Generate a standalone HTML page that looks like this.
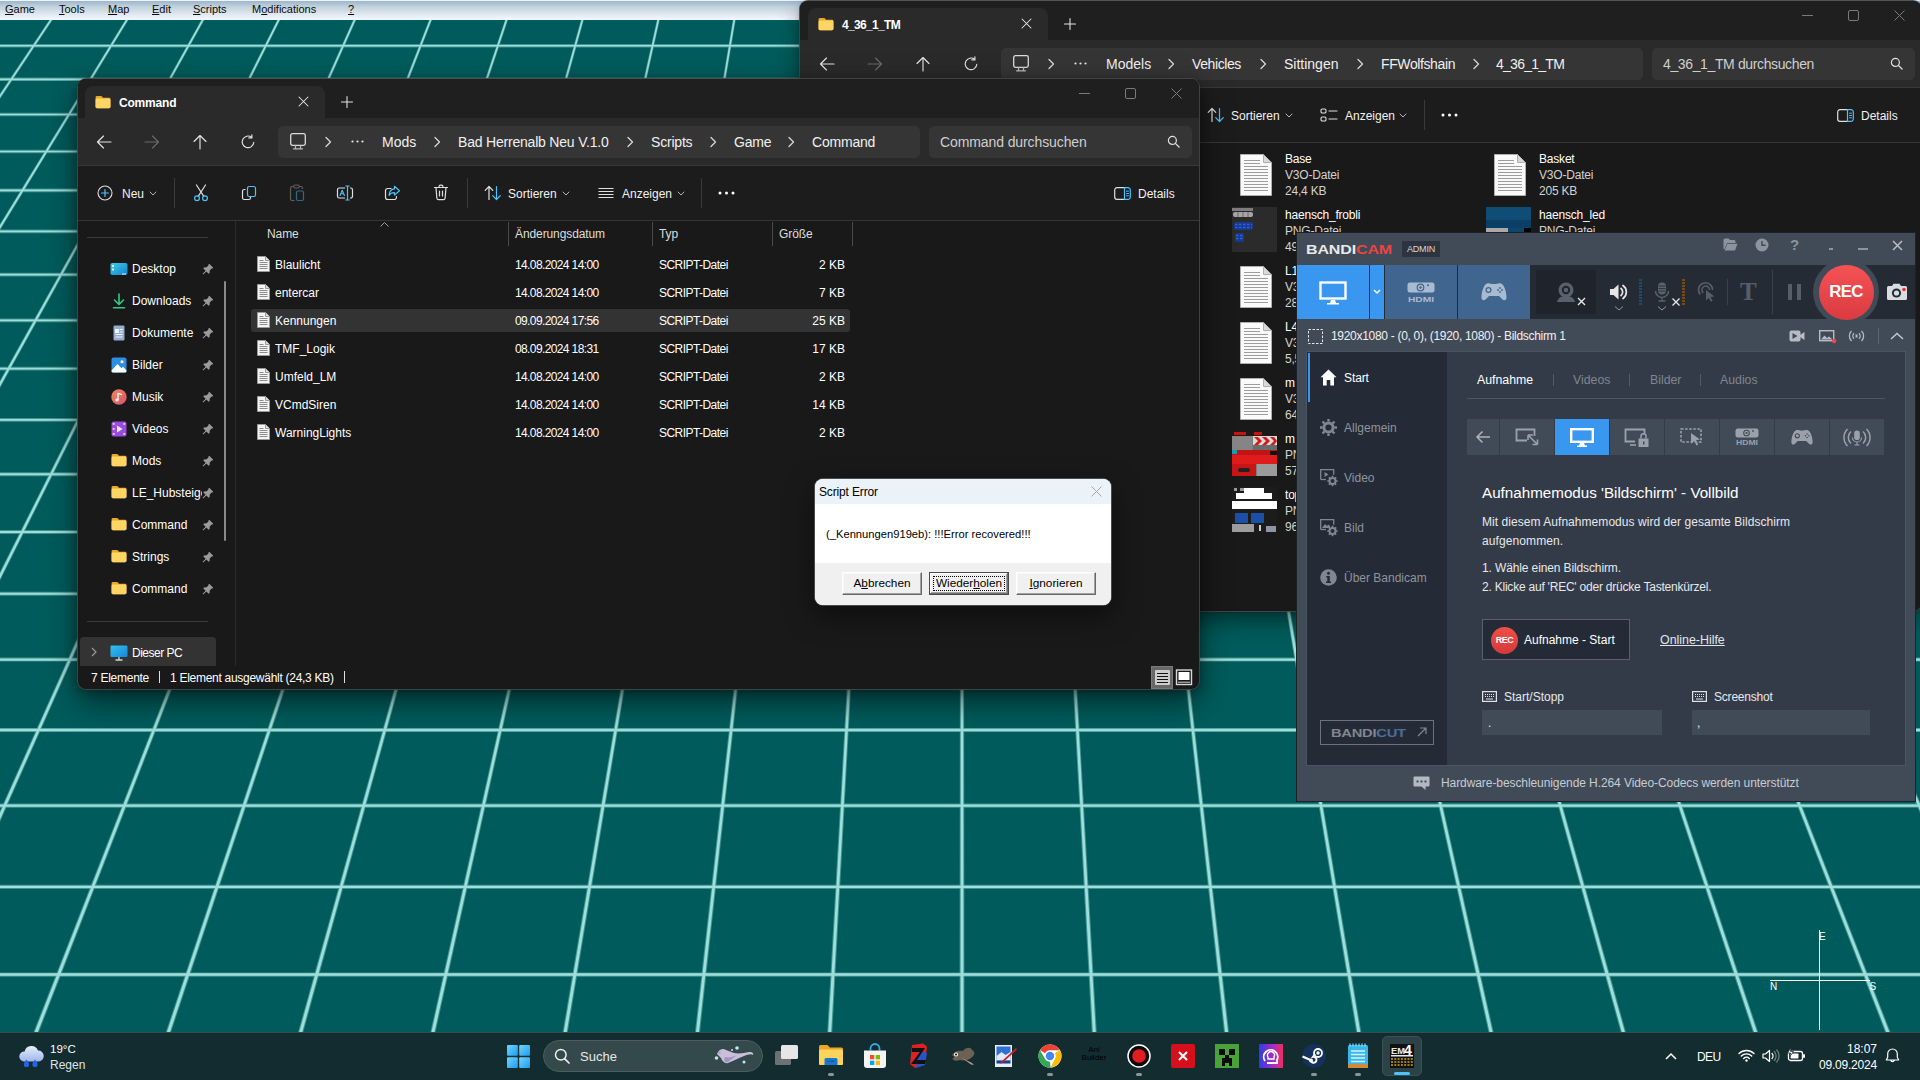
<!DOCTYPE html>
<html lang="de"><head><meta charset="utf-8"><title>Desktop</title>
<style>
*{box-sizing:border-box;margin:0;padding:0}
html,body{width:1920px;height:1080px;overflow:hidden;background:#005c5c}
body{position:relative;font-family:"Liberation Sans","DejaVu Sans",sans-serif;font-size:12px;color:#fff}
.abs{position:absolute}
#grid{position:absolute;left:0;top:0}
svg{display:block;overflow:visible}
.t{position:absolute;white-space:nowrap;height:20px;line-height:22px}
u{text-decoration:underline;text-underline-offset:1px}

.mn{top:0;height:19px;line-height:19px;font-size:11px;color:#0a0a0a}
.frame{position:absolute;left:78px;top:79px;width:1121px;height:610px;background:#191919;border-radius:8px;box-shadow:0 0 0 1px rgba(70,70,70,.9),0 12px 32px rgba(0,0,0,.55),0 2px 10px rgba(0,0,0,.35)}
.win{position:absolute;width:0;height:0}
#win2 .frame{box-shadow:0 0 0 1px rgba(70,70,70,.9),0 10px 22px rgba(0,0,0,.45),0 1px 5px rgba(0,0,0,.25)}
.crumb{font-size:14px;color:#f0f0f0;height:20px;line-height:20px}
.tb{font-size:12px;color:#f2f2f2}
.tl{font-size:12px;color:#fff;letter-spacing:-.2px;line-height:20px}
.tl.g{color:#d2d2d2}
.sb{font-size:12px;color:#fff}
.hd{font-size:12px;color:#dedede;letter-spacing:-.1px}
.rw{font-size:12px;color:#fff}
.rw.d{letter-spacing:-.62px}
.rw.ty{letter-spacing:-.55px}
.st{font-size:12px;color:#fff;letter-spacing:-.1px}
.btn{position:absolute;top:93px;width:80px;height:23px;background:#f0f0f0;font-size:11.800px;color:#000;text-align:center;line-height:21px;border:1px solid;border-color:#fff #696969 #696969 #fff;box-shadow:inset -1px -1px 0 #a0a0a0,inset 1px 1px 0 #f7f7f7;white-space:nowrap}
.btn.def{border-color:#4a4a4a;box-shadow:inset -1px -1px 0 #6f6f6f,inset 1px 1px 0 #fff,inset -2px -2px 0 #a0a0a0;line-height:21px}
.btn .foc{position:absolute;left:3px;top:3px;right:3px;bottom:3px;border:1px dotted #000}
.nv{font-size:12px;color:#8d949e}
.tab2{font-size:12.300px;color:#7e8690}
.mb{top:419px;width:54px;height:36px;background:#414b58}
.bp{font-size:12px;color:#e6e8eb}
.cp{font-size:10px;color:#fff}
.pill{top:1073px;width:6px;height:3px;border-radius:1.500px;background:#8a9799}
</style></head><body>
<svg id="grid" width="1920" height="1080" viewBox="0 0 1920 1080"><rect width="1920" height="1080" fill="#005c5c"/><path d="M0 12.07H1920V15.54H0ZM0 44.05H1920V47.55H0ZM0 77.58H1920V81.10H0ZM0 112.76H1920V116.32H0ZM0 149.72H1920V153.32H0ZM0 188.61H1920V192.25H0ZM0 229.58H1920V233.25H0ZM0 272.79H1920V276.51H0ZM0 318.44H1920V322.21H0ZM0 366.75H1920V370.56H0ZM0 417.94H1920V421.80H0ZM0 472.29H1920V476.21H0ZM0 530.10H1920V534.07H0ZM0 591.71H1920V595.74H0ZM0 657.50H1920V661.60H0ZM0 727.92H1920V732.09H0ZM0 803.47H1920V807.71H0ZM0 884.74H1920V889.06H0ZM0 972.40H1920V976.80H0ZM0 1067.23H1920V1071.73H0ZM-236.88 0 L-233.09 0 L-1193.42 1080 L-1200.26 1080ZM-162.01 0 L-158.33 0 L-1058.59 1080 L-1065.24 1080ZM-87.15 0 L-83.56 0 L-923.75 1080 L-930.22 1080ZM-12.29 0 L-8.80 0 L-788.91 1080 L-795.21 1080ZM62.56 0 L65.97 0 L-654.06 1080 L-660.20 1080ZM137.42 0 L140.73 0 L-519.21 1080 L-525.19 1080ZM212.27 0 L215.51 0 L-384.35 1080 L-390.20 1080ZM287.12 0 L290.28 0 L-249.49 1080 L-255.20 1080ZM361.96 0 L365.06 0 L-114.63 1080 L-120.21 1080ZM436.80 0 L439.84 0 L20.25 1080 L14.77 1080ZM511.64 0 L514.62 0 L155.13 1080 L149.74 1080ZM586.48 0 L589.41 0 L290.01 1080 L284.71 1080ZM661.31 0 L664.20 0 L424.90 1080 L419.68 1080ZM736.13 0 L739.00 0 L559.80 1080 L554.63 1080ZM810.95 0 L813.80 0 L694.71 1080 L689.58 1080ZM885.77 0 L888.61 0 L829.63 1080 L824.52 1080ZM960.59 0 L963.41 0 L964.55 1080 L959.45 1080ZM1035.39 0 L1038.23 0 L1099.48 1080 L1094.37 1080ZM1110.20 0 L1113.05 0 L1234.42 1080 L1229.29 1080ZM1185.00 0 L1187.87 0 L1369.37 1080 L1364.20 1080ZM1259.80 0 L1262.69 0 L1504.32 1080 L1499.10 1080ZM1334.59 0 L1337.52 0 L1639.29 1080 L1633.99 1080ZM1409.38 0 L1412.36 0 L1774.26 1080 L1768.87 1080ZM1484.16 0 L1487.20 0 L1909.23 1080 L1903.75 1080ZM1558.94 0 L1562.04 0 L2044.21 1080 L2038.63 1080ZM1633.72 0 L1636.88 0 L2179.20 1080 L2173.49 1080ZM1708.49 0 L1711.73 0 L2314.20 1080 L2308.35 1080ZM1783.27 0 L1786.58 0 L2449.19 1080 L2443.21 1080ZM1858.03 0 L1861.44 0 L2584.20 1080 L2578.06 1080ZM1932.80 0 L1936.29 0 L2719.21 1080 L2712.91 1080ZM2007.56 0 L2011.15 0 L2854.22 1080 L2847.75 1080ZM2082.33 0 L2086.01 0 L2989.24 1080 L2982.59 1080ZM2157.09 0 L2160.88 0 L3124.26 1080 L3117.42 1080Z" fill="#9cdeda" fill-opacity=".42"/><path d="M0 13.02H1920V14.59H0ZM0 45.00H1920V46.60H0ZM0 78.53H1920V80.15H0ZM0 113.71H1920V115.37H0ZM0 150.67H1920V152.37H0ZM0 189.56H1920V191.30H0ZM0 230.53H1920V232.30H0ZM0 273.74H1920V275.56H0ZM0 319.39H1920V321.26H0ZM0 367.70H1920V369.61H0ZM0 418.89H1920V420.85H0ZM0 473.24H1920V475.26H0ZM0 531.05H1920V533.12H0ZM0 592.66H1920V594.79H0ZM0 658.45H1920V660.65H0ZM0 728.87H1920V731.14H0ZM0 804.42H1920V806.76H0ZM0 885.69H1920V888.11H0ZM0 973.35H1920V975.85H0ZM0 1068.18H1920V1070.78H0ZM-236.08 0 L-233.88 0 L-1194.86 1080 L-1198.82 1080ZM-161.24 0 L-159.10 0 L-1059.98 1080 L-1063.84 1080ZM-86.40 0 L-84.32 0 L-925.11 1080 L-928.86 1080ZM-11.56 0 L-9.53 0 L-790.23 1080 L-793.88 1080ZM63.28 0 L65.25 0 L-655.35 1080 L-658.91 1080ZM138.11 0 L140.04 0 L-520.47 1080 L-523.94 1080ZM212.95 0 L214.83 0 L-385.58 1080 L-388.97 1080ZM287.78 0 L289.62 0 L-250.69 1080 L-254.00 1080ZM362.61 0 L364.41 0 L-115.80 1080 L-119.04 1080ZM437.44 0 L439.20 0 L19.10 1080 L15.92 1080ZM512.27 0 L514.00 0 L154.00 1080 L150.87 1080ZM587.09 0 L588.80 0 L288.90 1080 L285.83 1080ZM661.91 0 L663.60 0 L423.81 1080 L420.77 1080ZM736.73 0 L738.40 0 L558.72 1080 L555.72 1080ZM811.55 0 L813.20 0 L693.63 1080 L690.66 1080ZM886.37 0 L888.01 0 L828.55 1080 L825.59 1080ZM961.18 0 L962.82 0 L963.48 1080 L960.52 1080ZM1035.99 0 L1037.63 0 L1098.41 1080 L1095.45 1080ZM1110.80 0 L1112.45 0 L1233.34 1080 L1230.37 1080ZM1185.60 0 L1187.27 0 L1368.28 1080 L1365.28 1080ZM1260.40 0 L1262.09 0 L1503.23 1080 L1500.19 1080ZM1335.20 0 L1336.91 0 L1638.17 1080 L1635.10 1080ZM1410.00 0 L1411.73 0 L1773.13 1080 L1770.00 1080ZM1484.80 0 L1486.56 0 L1908.08 1080 L1904.90 1080ZM1559.59 0 L1561.39 0 L2043.04 1080 L2039.80 1080ZM1634.38 0 L1636.22 0 L2178.00 1080 L2174.69 1080ZM1709.17 0 L1711.05 0 L2312.97 1080 L2309.58 1080ZM1783.96 0 L1785.89 0 L2447.94 1080 L2444.47 1080ZM1858.75 0 L1860.72 0 L2582.91 1080 L2579.35 1080ZM1933.53 0 L1935.56 0 L2717.88 1080 L2714.23 1080ZM2008.32 0 L2010.40 0 L2852.86 1080 L2849.11 1080ZM2083.10 0 L2085.24 0 L2987.84 1080 L2983.98 1080ZM2157.88 0 L2160.08 0 L3122.82 1080 L3118.86 1080Z" fill="#9edfdb"/></svg>
<div class="abs" id="menubar" style="left:0;top:0;width:1920px;height:19.600px;background:linear-gradient(#eef4fc 0,#eef4fc 1px,#9fb7cf 1.2px,#a6bcd1 2.5px,#bfd2dc 6.5px,#d2dce5 10.500px,#e2e8f1 14.500px,#eef4fc 18px,#eef6fe 20px)"></div>
<div class="t mn" style="left:5px"><u>G</u>ame</div>
<div class="t mn" style="left:59px"><u>T</u>ools</div>
<div class="t mn" style="left:108px"><u>M</u>ap</div>
<div class="t mn" style="left:152px"><u>E</u>dit</div>
<div class="t mn" style="left:193px"><u>S</u>cripts</div>
<div class="t mn" style="left:252px">M<u>o</u>difications</div>
<div class="t mn" style="left:348px"><u>?</u></div>
<div class="win" id="win2" style="left:722px;top:-78px">
<div class="frame"></div>
<div class="abs" style="left:78px;top:79px;width:1121px;height:39px;background:#1f1f1f;border-radius:8px 8px 0 0"></div>
<div class="abs" style="left:78px;top:118px;width:1121px;height:48px;background:#2a2a2a;border-bottom:1px solid #383838"></div>
<div class="abs" style="left:78px;top:166px;width:1121px;height:55px;background:#1c1c1c;border-bottom:1px solid #363636"></div>
<div class="abs" style="left:1px;top:0;width:0;height:0">
<div class="abs" style="left:85px;top:86px;width:240px;height:32px;background:#2a2a2a;border-radius:8px 8px 0 0"></div>
<svg style="position:absolute;left:95px;top:95px" width="16" height="14" viewBox="0 0 18 16"><path d="M0.5 2.6A1.6 1.6 0 0 1 2.1 1h4.2c.5 0 .9.2 1.2.5L9 3h6.9a1.6 1.6 0 0 1 1.6 1.6v8.8A1.6 1.6 0 0 1 15.900000000000002 15H2.1A1.6 1.6 0 0 1 .5 13.4Z" fill="#e9a825"/><path d="M.5 5.600000000000001A1.6 1.6 0 0 1 2.1 4H15.9a1.6 1.6 0 0 1 1.6 1.6v7.8A1.6 1.6 0 0 1 15.9 15H2.1A1.6 1.6 0 0 1 .5 13.4Z" fill="#fdd565"/></svg>
<div class="t" style="left:119px;top:92px;font-size:12px;font-weight:bold;letter-spacing:-.67px;color:#fff">4_36_1_TM</div>
<svg class="abs" style="left:298px;top:96px" width="11" height="11" viewBox="0 0 11 11"><path d="M1 1l9 9M10 1l-9 9" stroke="#e6e6e6" stroke-width="1.050" stroke-linecap="round"/></svg>
<svg class="abs" style="left:341px;top:96px" width="12" height="12" viewBox="0 0 12 12"><path d="M6 .5v11M.5 6h11" stroke="#e6e6e6" stroke-width="1.050" stroke-linecap="round"/></svg>
<svg class="abs" style="left:1079px;top:93px" width="11" height="2" viewBox="0 0 11 2"><path d="M0 .5h11" stroke="#7a7a7a" stroke-width="1"/></svg>
<svg class="abs" style="left:1125px;top:88px" width="11" height="11" viewBox="0 0 11 11"><rect x=".5" y=".5" width="10" height="10" rx="1.500" fill="none" stroke="#7a7a7a" stroke-width="1"/></svg>
<svg class="abs" style="left:1171px;top:88px" width="11" height="11" viewBox="0 0 11 11"><path d="M.5.500l10 10M10.500.5l-10 10" stroke="#7a7a7a" stroke-width="1"/></svg>
<svg style="position:absolute;left:96px;top:135px" width="16" height="14" viewBox="0 0 16 14"><path d="M15 7H1.500M7.500 1 1.500 7l6 6" fill="none" stroke="#e4e4e4" stroke-width="1.150" stroke-linecap="round" stroke-linejoin="round"/></svg>
<svg style="position:absolute;left:144px;top:135px" width="16" height="14" viewBox="0 0 16 14"><path d="M1 7h13.500M8.500 1l6 6-6 6" fill="none" stroke="#6a6a6a" stroke-width="1.150" stroke-linecap="round" stroke-linejoin="round"/></svg>
<svg style="position:absolute;left:193px;top:134px" width="14" height="16" viewBox="0 0 14 16"><path d="M7 15V1.500M1 7.500l6-6 6 6" fill="none" stroke="#e4e4e4" stroke-width="1.150" stroke-linecap="round" stroke-linejoin="round"/></svg>
<svg style="position:absolute;left:240px;top:134px" width="16" height="16" viewBox="0 0 16 16"><path d="M13.800 8.300A5.800 5.800 0 1 1 11.600 3.300" fill="none" stroke="#e4e4e4" stroke-width="1.150" stroke-linecap="round"/><path d="M11.900.8v3.100H8.800" fill="none" stroke="#e4e4e4" stroke-width="1.150" stroke-linecap="round" stroke-linejoin="round"/></svg>
<div class="abs" style="left:278px;top:126px;width:642px;height:32px;background:#353535;border-radius:5px"></div>
<svg style="position:absolute;left:289px;top:133px" width="18" height="17" viewBox="0 0 18 17"><rect x="1.700" y=".7" width="14.600" height="11.600" rx="1.800" fill="none" stroke="#dcdcdc" stroke-width="1.300"/><path d="M6.500 12.500v3M11.500 12.500v3M4.500 15.800h9" stroke="#b8b8b8" stroke-width="1.300" stroke-linecap="round"/></svg>
<svg style="position:absolute;left:324px;top:136px" width="8" height="12" viewBox="0 0 8 12"><path d="M2 1.500 6.500 6 2 10.500" fill="none" stroke="#d6d6d6" stroke-width="1.300" stroke-linecap="round" stroke-linejoin="round"/></svg>
<svg class="abs" style="left:351px;top:140px" width="13" height="3" viewBox="0 0 13 3"><circle cx="1.500" cy="1.500" r="1.100" fill="#e8e8e8"/><circle cx="6.500" cy="1.500" r="1.100" fill="#e8e8e8"/><circle cx="11.500" cy="1.500" r="1.100" fill="#e8e8e8"/></svg>
<div class="t crumb" style="left:383px;top:132px">Models</div>
<svg style="position:absolute;left:444px;top:136px" width="8" height="12" viewBox="0 0 8 12"><path d="M2 1.500 6.500 6 2 10.500" fill="none" stroke="#d6d6d6" stroke-width="1.300" stroke-linecap="round" stroke-linejoin="round"/></svg>
<div class="t crumb" style="left:469px;top:132px;letter-spacing:-.4px">Vehicles</div>
<svg style="position:absolute;left:536px;top:136px" width="8" height="12" viewBox="0 0 8 12"><path d="M2 1.500 6.500 6 2 10.500" fill="none" stroke="#d6d6d6" stroke-width="1.300" stroke-linecap="round" stroke-linejoin="round"/></svg>
<div class="t crumb" style="left:561px;top:132px;letter-spacing:0">Sittingen</div>
<svg style="position:absolute;left:633px;top:136px" width="8" height="12" viewBox="0 0 8 12"><path d="M2 1.500 6.500 6 2 10.500" fill="none" stroke="#d6d6d6" stroke-width="1.300" stroke-linecap="round" stroke-linejoin="round"/></svg>
<div class="t crumb" style="left:658px;top:132px;letter-spacing:-.39px">FFWolfshain</div>
<svg style="position:absolute;left:749px;top:136px" width="8" height="12" viewBox="0 0 8 12"><path d="M2 1.500 6.500 6 2 10.500" fill="none" stroke="#d6d6d6" stroke-width="1.300" stroke-linecap="round" stroke-linejoin="round"/></svg>
<div class="t crumb" style="left:773px;top:132px;letter-spacing:-.74px">4_36_1_TM</div>

<div class="abs" style="left:929px;top:126px;width:263px;height:32px;background:#353535;border-radius:5px"></div>
<div class="t" style="left:940px;top:131px;font-size:14px;color:#cfcfcf;letter-spacing:-.37px">4_36_1_TM durchsuchen</div>
<svg style="position:absolute;left:1167px;top:135px" width="13" height="13" viewBox="0 0 14 14"><circle cx="5.800" cy="5.800" r="4.300" fill="none" stroke="#e0e0e0" stroke-width="1.300"/><path d="M9 9l4 4" stroke="#e0e0e0" stroke-width="1.400" stroke-linecap="round"/></svg>
</div>

<svg style="position:absolute;left:485px;top:185px" width="18" height="16" viewBox="0 0 18 16"><path d="M5 14.500V1.500M1.200 5.300 5 1.500l3.800 3.800" fill="none" stroke="#e0e0e0" stroke-width="1.200" stroke-linecap="round" stroke-linejoin="round"/><path d="M12.500 1.500v13M8.700 10.700l3.800 3.800 3.800-3.800" fill="none" stroke="#4cc2ff" stroke-width="1.200" stroke-linecap="round" stroke-linejoin="round"/></svg>
<div class="t tb" style="left:509px;top:183px">Sortieren</div>
<svg style="position:absolute;left:563px;top:191px" width="8" height="5" viewBox="0 0 8 5"><path d="M1 1 4 4 7 1" fill="none" stroke="#b4b4b4" stroke-width="1" stroke-linecap="round" stroke-linejoin="round"/></svg>
<svg style="position:absolute;left:598px;top:186px" width="18" height="14" viewBox="0 0 18 14"><rect x="1" y="1" width="5" height="4" rx="1.300" fill="none" stroke="#e0e0e0" stroke-width="1.100"/><rect x="1" y="9" width="5" height="4" rx="1.300" fill="none" stroke="#e0e0e0" stroke-width="1.100"/><path d="M9 3h8M9 11h8" stroke="#e0e0e0" stroke-width="1.100" stroke-linecap="round"/></svg>
<div class="t tb" style="left:623px;top:183px">Anzeigen</div>
<svg style="position:absolute;left:677px;top:191px" width="8" height="5" viewBox="0 0 8 5"><path d="M1 1 4 4 7 1" fill="none" stroke="#b4b4b4" stroke-width="1" stroke-linecap="round" stroke-linejoin="round"/></svg>
<div class="abs" style="left:702px;top:178px;width:1px;height:30px;background:#3a3a3a"></div>
<svg class="abs" style="left:719px;top:191px" width="17" height="4" viewBox="0 0 17 4"><circle cx="2" cy="2" r="1.500" fill="#fff"/><circle cx="8.500" cy="2" r="1.500" fill="#fff"/><circle cx="15" cy="2" r="1.500" fill="#fff"/></svg>
<svg style="position:absolute;left:1115px;top:187px" width="17" height="13" viewBox="0 0 17 13"><path d="M10.500.7H3A2.300 2.300 0 0 0 .7 3v7A2.300 2.300 0 0 0 3 12.300h7.500" fill="none" stroke="#e0e0e0" stroke-width="1.200"/><path d="M10.500.7H14A2.300 2.300 0 0 1 16.300 3v7A2.300 2.300 0 0 1 14 12.300H10.500Z" fill="none" stroke="#4cc2ff" stroke-width="1.200"/><path d="M12.500 4.200h2M12.500 6.500h2M12.500 8.800h2" stroke="#4cc2ff" stroke-width="1" stroke-linecap="round"/></svg>
<div class="t tb" style="left:1139px;top:183px">Details</div>

<svg style="position:absolute;left:518px;top:232px" width="32" height="42" viewBox="0 0 32 42"><path d="M.5.500h23l8 8v33H.5Z" fill="#fafafa" stroke="#b0b0b0"/><path d="M23.500.5v8h8Z" fill="#d8d8d8" stroke="#b0b0b0"/><path d="M4 6.500h16M4 9.500h16M4 12.500h24M4 15.500h24M4 18.500h24M4 21.500h24M4 24.500h24M4 27.500h24M4 30.500h24M4 33.500h24M4 36.500h24" stroke="#9c9c9c" stroke-width="1"/></svg>
<div class="t tl" style="left:563px;top:227px">Base</div><div class="t tl g" style="left:563px;top:243px">V3O-Datei</div><div class="t tl g" style="left:563px;top:259px">24,4 KB</div>
<svg style="position:absolute;left:772px;top:232px" width="32" height="42" viewBox="0 0 32 42"><path d="M.5.500h23l8 8v33H.5Z" fill="#fafafa" stroke="#b0b0b0"/><path d="M23.500.5v8h8Z" fill="#d8d8d8" stroke="#b0b0b0"/><path d="M4 6.500h16M4 9.500h16M4 12.500h24M4 15.500h24M4 18.500h24M4 21.500h24M4 24.500h24M4 27.500h24M4 30.500h24M4 33.500h24M4 36.500h24" stroke="#9c9c9c" stroke-width="1"/></svg>
<div class="t tl" style="left:817px;top:227px">Basket</div><div class="t tl g" style="left:817px;top:243px">V3O-Datei</div><div class="t tl g" style="left:817px;top:259px">205 KB</div>

<svg class="abs" style="left:510px;top:285px" width="45" height="45" viewBox="0 0 45 45"><rect width="45" height="45" fill="#2b2b2b"/><rect x="0" y="1" width="21" height="3" fill="#7d7d7d"/><rect x="1" y="5" width="20" height="5" rx="2" fill="#a5a5a5"/><path d="M6 5v5M11 5v5M16 5v5" stroke="#6a6a6a" stroke-width="1"/><rect x="2" y="15" width="19" height="8" rx="2" fill="#163a8f"/><path d="M3 17.500h17M3 20.500h17" stroke="#2f62d6" stroke-width="1.600" stroke-dasharray="2.500 1.500"/><rect x="3" y="26" width="9" height="9" rx="1.500" fill="#163a8f"/><path d="M4 28.500h7M4 31.500h7" stroke="#2f62d6" stroke-width="1.600" stroke-dasharray="2.500 1.500"/></svg>
<div class="t tl" style="left:563px;top:283px">haensch_frobli</div><div class="t tl g" style="left:563px;top:299px">PNG-Datei</div><div class="t tl g" style="left:563px;top:315px">49,1 KB</div>
<svg class="abs" style="left:764px;top:285px" width="45" height="45" viewBox="0 0 45 45"><rect width="45" height="45" fill="#0f4d77"/><rect y="13" width="45" height="8" fill="#0b3f66"/><rect y="21" width="22" height="8" fill="#a9a9a9"/><rect x="22" y="21" width="23" height="24" fill="#0c466f"/><rect x="38" y="21" width="7" height="7" fill="#000"/></svg>
<div class="t tl" style="left:817px;top:283px">haensch_led</div><div class="t tl g" style="left:817px;top:299px">PNG-Datei</div><div class="t tl g" style="left:817px;top:315px">12,6 KB</div>

<svg style="position:absolute;left:518px;top:344px" width="32" height="42" viewBox="0 0 32 42"><path d="M.5.500h23l8 8v33H.5Z" fill="#fafafa" stroke="#b0b0b0"/><path d="M23.500.5v8h8Z" fill="#d8d8d8" stroke="#b0b0b0"/><path d="M4 6.500h16M4 9.500h16M4 12.500h24M4 15.500h24M4 18.500h24M4 21.500h24M4 24.500h24M4 27.500h24M4 30.500h24M4 33.500h24M4 36.500h24" stroke="#9c9c9c" stroke-width="1"/></svg>
<div class="t tl" style="left:563px;top:339px">L1_Logo</div><div class="t tl g" style="left:563px;top:355px">V3O-Datei</div><div class="t tl g" style="left:563px;top:371px">28,7 KB</div>
<svg style="position:absolute;left:518px;top:400px" width="32" height="42" viewBox="0 0 32 42"><path d="M.5.500h23l8 8v33H.5Z" fill="#fafafa" stroke="#b0b0b0"/><path d="M23.500.5v8h8Z" fill="#d8d8d8" stroke="#b0b0b0"/><path d="M4 6.500h16M4 9.500h16M4 12.500h24M4 15.500h24M4 18.500h24M4 21.500h24M4 24.500h24M4 27.500h24M4 30.500h24M4 33.500h24M4 36.500h24" stroke="#9c9c9c" stroke-width="1"/></svg>
<div class="t tl" style="left:563px;top:395px">L4_Logo</div><div class="t tl g" style="left:563px;top:411px">V3O-Datei</div><div class="t tl g" style="left:563px;top:427px">5,51 KB</div>
<svg style="position:absolute;left:518px;top:456px" width="32" height="42" viewBox="0 0 32 42"><path d="M.5.500h23l8 8v33H.5Z" fill="#fafafa" stroke="#b0b0b0"/><path d="M23.500.5v8h8Z" fill="#d8d8d8" stroke="#b0b0b0"/><path d="M4 6.500h16M4 9.500h16M4 12.500h24M4 15.500h24M4 18.500h24M4 21.500h24M4 24.500h24M4 27.500h24M4 30.500h24M4 33.500h24M4 36.500h24" stroke="#9c9c9c" stroke-width="1"/></svg>
<div class="t tl" style="left:563px;top:451px;width:10px;overflow:hidden">main</div><div class="t tl g" style="left:563px;top:467px">V3O-Datei</div><div class="t tl g" style="left:563px;top:483px">64,2 KB</div>

<svg class="abs" style="left:510px;top:509px" width="45" height="45" viewBox="0 0 45 45"><rect width="45" height="45" fill="#7d7d7d"/><rect width="45" height="5" fill="#1a1a1a"/><rect x="2" y="1" width="12" height="3" fill="#c11"/><rect x="22" y="1" width="8" height="3" fill="#c11"/><rect y="5" width="20" height="14" fill="#858585"/><rect x="21" y="5" width="24" height="9" fill="#d9d9d9"/><path d="M22 6h4l4 4-4 4h-4l4-4zM30 6h4l4 4-4 4h-4l4-4zM38 6h4l3 4-3 4h-4l4-4z" fill="#d41a1a"/><rect x="21" y="14" width="24" height="5" fill="#6a6a6a"/><rect y="19" width="45" height="5" fill="#c21414"/><rect y="19" width="5" height="4" fill="#14a0b8"/><rect y="24" width="45" height="9" fill="#e01b1b"/><rect y="33" width="24" height="12" fill="#c81616"/><rect x="6" y="37" width="12" height="4" rx="2" fill="#222"/><rect x="25" y="33" width="20" height="12" fill="#9b9b9b"/><rect x="38" y="20" width="7" height="4" fill="#111"/></svg>
<div class="t tl" style="left:563px;top:507px;width:10px;overflow:hidden">main_tex</div><div class="t tl g" style="left:563px;top:523px">PNG-Datei</div><div class="t tl g" style="left:563px;top:539px">57,9 KB</div>
<svg class="abs" style="left:510px;top:565px" width="45" height="45" viewBox="0 0 45 45"><rect width="45" height="45" fill="#1c1c1c"/><rect x="2" y="1" width="3" height="3" fill="#999"/><rect x="8" y="1" width="4" height="3" fill="#999"/><rect x="12" y="1" width="20" height="6" fill="#fff"/><rect x="4" y="6" width="36" height="6" fill="#fff"/><rect y="14" width="45" height="8" fill="#fff"/><rect x="3" y="26" width="13" height="10" fill="#1c4fa8"/><rect x="19" y="26" width="13" height="10" fill="#1c4fa8"/><rect y="37" width="22" height="8" fill="#9d9d9d"/><rect x="34" y="39" width="10" height="6" fill="#8f96a3"/><rect x="27" y="38" width="2" height="6" fill="#ccc"/></svg>
<div class="t tl" style="left:563px;top:563px;width:11px;overflow:hidden">top_tex</div><div class="t tl g" style="left:563px;top:579px">PNG-Datei</div><div class="t tl g" style="left:563px;top:595px">96,3 KB</div>
</div>
<div class="win" id="win1" style="left:0;top:0">
<div class="frame"></div>
<div class="abs" style="left:78px;top:79px;width:1121px;height:39px;background:#1f1f1f;border-radius:8px 8px 0 0"></div>
<div class="abs" style="left:78px;top:118px;width:1121px;height:48px;background:#2a2a2a;border-bottom:1px solid #383838"></div>
<div class="abs" style="left:78px;top:166px;width:1121px;height:55px;background:#1c1c1c;border-bottom:1px solid #363636"></div>
<div class="abs" style="left:0px;top:0;width:0;height:0">
<div class="abs" style="left:85px;top:86px;width:240px;height:32px;background:#2a2a2a;border-radius:8px 8px 0 0"></div>
<svg style="position:absolute;left:95px;top:95px" width="16" height="14" viewBox="0 0 18 16"><path d="M0.5 2.6A1.6 1.6 0 0 1 2.1 1h4.2c.5 0 .9.2 1.2.5L9 3h6.9a1.6 1.6 0 0 1 1.6 1.6v8.8A1.6 1.6 0 0 1 15.900000000000002 15H2.1A1.6 1.6 0 0 1 .5 13.4Z" fill="#e9a825"/><path d="M.5 5.600000000000001A1.6 1.6 0 0 1 2.1 4H15.9a1.6 1.6 0 0 1 1.6 1.6v7.8A1.6 1.6 0 0 1 15.9 15H2.1A1.6 1.6 0 0 1 .5 13.4Z" fill="#fdd565"/></svg>
<div class="t" style="left:119px;top:92px;font-size:12px;font-weight:bold;letter-spacing:-.2px;color:#fff">Command</div>
<svg class="abs" style="left:298px;top:96px" width="11" height="11" viewBox="0 0 11 11"><path d="M1 1l9 9M10 1l-9 9" stroke="#e6e6e6" stroke-width="1.050" stroke-linecap="round"/></svg>
<svg class="abs" style="left:341px;top:96px" width="12" height="12" viewBox="0 0 12 12"><path d="M6 .5v11M.5 6h11" stroke="#e6e6e6" stroke-width="1.050" stroke-linecap="round"/></svg>
<svg class="abs" style="left:1079px;top:93px" width="11" height="2" viewBox="0 0 11 2"><path d="M0 .5h11" stroke="#7a7a7a" stroke-width="1"/></svg>
<svg class="abs" style="left:1125px;top:88px" width="11" height="11" viewBox="0 0 11 11"><rect x=".5" y=".5" width="10" height="10" rx="1.500" fill="none" stroke="#7a7a7a" stroke-width="1"/></svg>
<svg class="abs" style="left:1171px;top:88px" width="11" height="11" viewBox="0 0 11 11"><path d="M.5.500l10 10M10.500.5l-10 10" stroke="#7a7a7a" stroke-width="1"/></svg>
<svg style="position:absolute;left:96px;top:135px" width="16" height="14" viewBox="0 0 16 14"><path d="M15 7H1.500M7.500 1 1.500 7l6 6" fill="none" stroke="#e4e4e4" stroke-width="1.150" stroke-linecap="round" stroke-linejoin="round"/></svg>
<svg style="position:absolute;left:144px;top:135px" width="16" height="14" viewBox="0 0 16 14"><path d="M1 7h13.500M8.500 1l6 6-6 6" fill="none" stroke="#6a6a6a" stroke-width="1.150" stroke-linecap="round" stroke-linejoin="round"/></svg>
<svg style="position:absolute;left:193px;top:134px" width="14" height="16" viewBox="0 0 14 16"><path d="M7 15V1.500M1 7.500l6-6 6 6" fill="none" stroke="#e4e4e4" stroke-width="1.150" stroke-linecap="round" stroke-linejoin="round"/></svg>
<svg style="position:absolute;left:240px;top:134px" width="16" height="16" viewBox="0 0 16 16"><path d="M13.800 8.300A5.800 5.800 0 1 1 11.600 3.300" fill="none" stroke="#e4e4e4" stroke-width="1.150" stroke-linecap="round"/><path d="M11.900.8v3.100H8.800" fill="none" stroke="#e4e4e4" stroke-width="1.150" stroke-linecap="round" stroke-linejoin="round"/></svg>
<div class="abs" style="left:278px;top:126px;width:642px;height:32px;background:#353535;border-radius:5px"></div>
<svg style="position:absolute;left:289px;top:133px" width="18" height="17" viewBox="0 0 18 17"><rect x="1.700" y=".7" width="14.600" height="11.600" rx="1.800" fill="none" stroke="#dcdcdc" stroke-width="1.300"/><path d="M6.500 12.500v3M11.500 12.500v3M4.500 15.800h9" stroke="#b8b8b8" stroke-width="1.300" stroke-linecap="round"/></svg>
<svg style="position:absolute;left:324px;top:136px" width="8" height="12" viewBox="0 0 8 12"><path d="M2 1.500 6.500 6 2 10.500" fill="none" stroke="#d6d6d6" stroke-width="1.300" stroke-linecap="round" stroke-linejoin="round"/></svg>
<svg class="abs" style="left:351px;top:140px" width="13" height="3" viewBox="0 0 13 3"><circle cx="1.500" cy="1.500" r="1.100" fill="#e8e8e8"/><circle cx="6.500" cy="1.500" r="1.100" fill="#e8e8e8"/><circle cx="11.500" cy="1.500" r="1.100" fill="#e8e8e8"/></svg>
<div class="t crumb" style="left:382px;top:132px">Mods</div>
<svg style="position:absolute;left:433px;top:136px" width="8" height="12" viewBox="0 0 8 12"><path d="M2 1.500 6.500 6 2 10.500" fill="none" stroke="#d6d6d6" stroke-width="1.300" stroke-linecap="round" stroke-linejoin="round"/></svg>
<div class="t crumb" style="left:458px;top:132px;letter-spacing:-.2px">Bad Herrenalb Neu V.1.0</div>
<svg style="position:absolute;left:626px;top:136px" width="8" height="12" viewBox="0 0 8 12"><path d="M2 1.500 6.500 6 2 10.500" fill="none" stroke="#d6d6d6" stroke-width="1.300" stroke-linecap="round" stroke-linejoin="round"/></svg>
<div class="t crumb" style="left:651px;top:132px;letter-spacing:-.2px">Scripts</div>
<svg style="position:absolute;left:709px;top:136px" width="8" height="12" viewBox="0 0 8 12"><path d="M2 1.500 6.500 6 2 10.500" fill="none" stroke="#d6d6d6" stroke-width="1.300" stroke-linecap="round" stroke-linejoin="round"/></svg>
<div class="t crumb" style="left:734px;top:132px;letter-spacing:-.2px">Game</div>
<svg style="position:absolute;left:787px;top:136px" width="8" height="12" viewBox="0 0 8 12"><path d="M2 1.500 6.500 6 2 10.500" fill="none" stroke="#d6d6d6" stroke-width="1.300" stroke-linecap="round" stroke-linejoin="round"/></svg>
<div class="t crumb" style="left:812px;top:132px;letter-spacing:-.2px">Command</div>

<div class="abs" style="left:929px;top:126px;width:263px;height:32px;background:#353535;border-radius:5px"></div>
<div class="t" style="left:940px;top:131px;font-size:14px;color:#cfcfcf;letter-spacing:-.1px">Command durchsuchen</div>
<svg style="position:absolute;left:1167px;top:135px" width="13" height="13" viewBox="0 0 14 14"><circle cx="5.800" cy="5.800" r="4.300" fill="none" stroke="#e0e0e0" stroke-width="1.300"/><path d="M9 9l4 4" stroke="#e0e0e0" stroke-width="1.400" stroke-linecap="round"/></svg>
</div>

<svg style="position:absolute;left:97px;top:185px" width="16" height="16" viewBox="0 0 16 16"><circle cx="8" cy="8" r="7" fill="none" stroke="#e0e0e0" stroke-width="1.100"/><path d="M8 4.500v7M4.500 8h7" stroke="#4cc2ff" stroke-width="1.200" stroke-linecap="round"/></svg>
<div class="t tb" style="left:122px;top:183px">Neu</div>
<svg style="position:absolute;left:149px;top:191px" width="8" height="5" viewBox="0 0 8 5"><path d="M1 1 4 4 7 1" fill="none" stroke="#b4b4b4" stroke-width="1" stroke-linecap="round" stroke-linejoin="round"/></svg>
<div class="abs" style="left:174px;top:178px;width:1px;height:30px;background:#3a3a3a"></div>
<svg style="position:absolute;left:193px;top:184px" width="16" height="18" viewBox="0 0 16 18"><path d="M3.500 1 10.800 12.300M12.500 1 5.200 12.300" stroke="#e0e0e0" stroke-width="1.200" stroke-linecap="round"/><circle cx="4" cy="14.300" r="2.400" fill="none" stroke="#4cc2ff" stroke-width="1.200"/><circle cx="12" cy="14.300" r="2.400" fill="none" stroke="#4cc2ff" stroke-width="1.200"/></svg>
<svg style="position:absolute;left:241px;top:185px" width="16" height="16" viewBox="0 0 16 16"><path d="M4.500 4.500H3.300A1.800 1.800 0 0 0 1.500 6.300v6.400a1.800 1.800 0 0 0 1.800 1.800h4.400a1.800 1.800 0 0 0 1.800-1.800V12" fill="none" stroke="#e0e0e0" stroke-width="1.200"/><rect x="6.500" y="1.500" width="8" height="10" rx="1.800" fill="none" stroke="#4cc2ff" stroke-width="1.200"/></svg>
<svg style="position:absolute;left:289px;top:184px" width="16" height="18" viewBox="0 0 16 18"><path d="M5.500 16.500h-2.200A1.800 1.800 0 0 1 1.500 14.700V4.300A1.800 1.800 0 0 1 3.300 2.500H5M10 2.500h1.700a1.800 1.800 0 0 1 1.800 1.800V5" fill="none" stroke="#5e5e5e" stroke-width="1.200"/><rect x="4.800" y="1" width="5.400" height="3" rx="1.200" fill="none" stroke="#5e5e5e" stroke-width="1.100"/><rect x="7.500" y="7" width="7" height="9.500" rx="1.500" fill="none" stroke="#2c6a8a" stroke-width="1.200"/></svg>
<svg style="position:absolute;left:336px;top:185px" width="18" height="16" viewBox="0 0 18 16"><path d="M9 3H3.300A1.800 1.800 0 0 0 1.500 4.800v6.400A1.800 1.800 0 0 0 3.300 13H9M14 3h.7a1.800 1.800 0 0 1 1.800 1.800v6.400a1.800 1.800 0 0 1-1.800 1.800H14" fill="none" stroke="#e0e0e0" stroke-width="1.200"/><path d="M11.500 1v14M9.800 1h3.400M9.800 15h3.400" stroke="#4cc2ff" stroke-width="1.200" stroke-linecap="round"/><path d="M4 10.500 6.200 5.300 8.400 10.500M4.800 8.800h2.800" fill="none" stroke="#4cc2ff" stroke-width="1.100" stroke-linejoin="round" stroke-linecap="round"/></svg>
<svg style="position:absolute;left:384px;top:185px" width="17" height="16" viewBox="0 0 17 16"><path d="M7 3.500H3.800A2.300 2.300 0 0 0 1.500 5.800v6.400a2.300 2.300 0 0 0 2.300 2.300h6.400a2.300 2.300 0 0 0 2.300-2.300V11.500" fill="none" stroke="#e0e0e0" stroke-width="1.200" stroke-linecap="round"/><path d="M10.500 1.300 15.500 5.700 10.500 10.100V7.600C7.800 7.500 6.200 8.500 5 10.300 5.300 6.800 7.200 4.200 10.500 3.900Z" fill="none" stroke="#4cc2ff" stroke-width="1.200" stroke-linejoin="round"/></svg>
<svg style="position:absolute;left:433px;top:184px" width="16" height="17" viewBox="0 0 16 17"><path d="M1.500 3.500h13M6 3.300V2.800A1.600 1.600 0 0 1 7.600 1.200h.8A1.600 1.600 0 0 1 10 2.800v.5M3 3.700l.9 10.500a1.700 1.700 0 0 0 1.700 1.500h4.800a1.700 1.700 0 0 0 1.700-1.500L13 3.700M6.500 7v5M9.500 7v5" fill="none" stroke="#e0e0e0" stroke-width="1.200" stroke-linecap="round"/></svg>
<div class="abs" style="left:467px;top:178px;width:1px;height:30px;background:#3a3a3a"></div>
<svg style="position:absolute;left:484px;top:185px" width="18" height="16" viewBox="0 0 18 16"><path d="M5 14.500V1.500M1.200 5.300 5 1.500l3.800 3.800" fill="none" stroke="#e0e0e0" stroke-width="1.200" stroke-linecap="round" stroke-linejoin="round"/><path d="M12.500 1.500v13M8.700 10.700l3.800 3.800 3.800-3.800" fill="none" stroke="#4cc2ff" stroke-width="1.200" stroke-linecap="round" stroke-linejoin="round"/></svg>
<div class="t tb" style="left:508px;top:183px">Sortieren</div>
<svg style="position:absolute;left:562px;top:191px" width="8" height="5" viewBox="0 0 8 5"><path d="M1 1 4 4 7 1" fill="none" stroke="#b4b4b4" stroke-width="1" stroke-linecap="round" stroke-linejoin="round"/></svg>
<svg style="position:absolute;left:598px;top:187px" width="16" height="12" viewBox="0 0 16 12"><path d="M.5 1.500h15M.5 4.500h15M.5 7.500h15M.5 10.500h15" stroke="#e0e0e0" stroke-width="1.100"/></svg>
<div class="t tb" style="left:622px;top:183px">Anzeigen</div>
<svg style="position:absolute;left:677px;top:191px" width="8" height="5" viewBox="0 0 8 5"><path d="M1 1 4 4 7 1" fill="none" stroke="#b4b4b4" stroke-width="1" stroke-linecap="round" stroke-linejoin="round"/></svg>
<div class="abs" style="left:701px;top:178px;width:1px;height:30px;background:#3a3a3a"></div>
<svg class="abs" style="left:718px;top:191px" width="17" height="4" viewBox="0 0 17 4"><circle cx="2" cy="2" r="1.500" fill="#fff"/><circle cx="8.500" cy="2" r="1.500" fill="#fff"/><circle cx="15" cy="2" r="1.500" fill="#fff"/></svg>
<svg style="position:absolute;left:1114px;top:187px" width="17" height="13" viewBox="0 0 17 13"><path d="M10.500.7H3A2.300 2.300 0 0 0 .7 3v7A2.300 2.300 0 0 0 3 12.300h7.500" fill="none" stroke="#e0e0e0" stroke-width="1.200"/><path d="M10.500.7H14A2.300 2.300 0 0 1 16.300 3v7A2.300 2.300 0 0 1 14 12.300H10.500Z" fill="none" stroke="#4cc2ff" stroke-width="1.200"/><path d="M12.500 4.200h2M12.500 6.500h2M12.500 8.800h2" stroke="#4cc2ff" stroke-width="1" stroke-linecap="round"/></svg>
<div class="t tb" style="left:1138px;top:183px">Details</div>
<div class="abs" style="left:87px;top:237px;width:121px;height:1px;background:#3a3a3a"></div>
<div class="abs" style="left:235px;top:221px;width:1px;height:445px;background:#2b2b2b"></div>
<div class="abs" style="left:224px;top:281px;width:2px;height:260px;background:#8a8a8a;border-radius:1px"></div>
<svg style="position:absolute;left:110px;top:261px" width="18" height="16" viewBox="0 0 18 16"><defs><linearGradient id="dg" x1="0" y1="0" x2="1" y2="1"><stop offset="0" stop-color="#3ccbea"/><stop offset="1" stop-color="#1583cf"/></linearGradient></defs><rect x=".5" y="2" width="17" height="12" rx="1.800" fill="url(#dg)"/><rect x="2" y="4" width="2" height="2" fill="#d8f2ff"/><rect x="2" y="7.500" width="2" height="2" fill="#d8f2ff"/><rect x="12" y="12.500" width="4" height="1" fill="#d8f2ff"/></svg><div class="t sb" style="left:132px;top:258px">Desktop</div><svg style="position:absolute;left:202px;top:263px" width="12" height="12" viewBox="0 0 12 12"><path d="M7.200.8 11.200 4.800 10.300 5.700 9.600 5.500 7.700 7.400 7.600 9.900 6.700 10.800 4.300 8.400 1.300 11.400.6 10.700 3.600 7.700 1.200 5.300 2.100 4.400 4.600 4.300 6.500 2.400 6.300 1.700Z" fill="#9b9b9b"/></svg>
<svg style="position:absolute;left:110px;top:293px" width="18" height="16" viewBox="0 0 18 16"><path d="M9 1v10M4.500 7 9 11.500 13.500 7" fill="none" stroke="#2fc88c" stroke-width="1.600" stroke-linecap="round" stroke-linejoin="round"/><path d="M3.500 14.800h11" stroke="#2fc88c" stroke-width="1.600" stroke-linecap="round"/></svg><div class="t sb" style="left:132px;top:290px">Downloads</div><svg style="position:absolute;left:202px;top:295px" width="12" height="12" viewBox="0 0 12 12"><path d="M7.200.8 11.200 4.800 10.300 5.700 9.600 5.500 7.700 7.400 7.600 9.900 6.700 10.800 4.300 8.400 1.300 11.400.6 10.700 3.600 7.700 1.200 5.300 2.100 4.400 4.600 4.300 6.500 2.400 6.300 1.700Z" fill="#9b9b9b"/></svg>
<svg style="position:absolute;left:110px;top:325px" width="18" height="16" viewBox="0 0 18 16"><path d="M3.500 1.800A1.300 1.300 0 0 1 4.800.5h8.400a1.300 1.300 0 0 1 1.300 1.300v12.400a1.300 1.300 0 0 1-1.300 1.300H4.800a1.300 1.300 0 0 1-1.300-1.300Z" fill="#94add2"/><path d="M5.500 4.500h3v3h-3zM9.800 4.500h3M9.800 7h3M5.500 9.500h7M5.500 12h7" stroke="#f2f6fc" stroke-width="1.100" fill="#f2f6fc"/></svg><div class="t sb" style="left:132px;top:322px">Dokumente</div><svg style="position:absolute;left:202px;top:327px" width="12" height="12" viewBox="0 0 12 12"><path d="M7.200.8 11.200 4.800 10.300 5.700 9.600 5.500 7.700 7.400 7.600 9.900 6.700 10.800 4.300 8.400 1.300 11.400.6 10.700 3.600 7.700 1.200 5.300 2.100 4.400 4.600 4.300 6.500 2.400 6.300 1.700Z" fill="#9b9b9b"/></svg>
<svg style="position:absolute;left:110px;top:357px" width="18" height="16" viewBox="0 0 18 16"><rect x="1.500" y=".5" width="15" height="15" rx="2" fill="#2b8fe6"/><circle cx="12" cy="4.800" r="1.500" fill="#fff"/><path d="M1.500 13.500 7.500 7l4 4.300 1.600-1.500 3.400 3.700v.5a1.500 1.500 0 0 1-1.500 1.500H3a1.500 1.500 0 0 1-1.500-1.500Z" fill="#fff"/></svg><div class="t sb" style="left:132px;top:354px">Bilder</div><svg style="position:absolute;left:202px;top:359px" width="12" height="12" viewBox="0 0 12 12"><path d="M7.200.8 11.200 4.800 10.300 5.700 9.600 5.500 7.700 7.400 7.600 9.900 6.700 10.800 4.300 8.400 1.300 11.400.6 10.700 3.600 7.700 1.200 5.300 2.100 4.400 4.600 4.300 6.500 2.400 6.300 1.700Z" fill="#9b9b9b"/></svg>
<svg style="position:absolute;left:110px;top:389px" width="18" height="16" viewBox="0 0 18 16"><defs><linearGradient id="mg" x1="0" y1="0" x2="1" y2="1"><stop offset="0" stop-color="#f08a5a"/><stop offset="1" stop-color="#d8506e"/></linearGradient></defs><circle cx="9" cy="8" r="7.700" fill="url(#mg)"/><path d="M8 11V4.300l3.500 1.200" fill="none" stroke="#fff" stroke-width="1.300" stroke-linecap="round" stroke-linejoin="round"/><circle cx="6.900" cy="11" r="1.600" fill="#fff"/></svg><div class="t sb" style="left:132px;top:386px">Musik</div><svg style="position:absolute;left:202px;top:391px" width="12" height="12" viewBox="0 0 12 12"><path d="M7.200.8 11.200 4.800 10.300 5.700 9.600 5.500 7.700 7.400 7.600 9.900 6.700 10.800 4.300 8.400 1.300 11.400.6 10.700 3.600 7.700 1.200 5.300 2.100 4.400 4.600 4.300 6.500 2.400 6.300 1.700Z" fill="#9b9b9b"/></svg>
<svg style="position:absolute;left:110px;top:421px" width="18" height="16" viewBox="0 0 18 16"><rect x="1.500" y=".5" width="15" height="15" rx="2" fill="#9a4ddb"/><rect x="2.800" y="2" width="1.800" height="1.800" fill="#e9d4ff"/><rect x="2.800" y="7" width="1.800" height="1.800" fill="#e9d4ff"/><rect x="2.800" y="12" width="1.800" height="1.800" fill="#e9d4ff"/><rect x="13.400" y="2" width="1.800" height="1.800" fill="#e9d4ff"/><rect x="13.400" y="12" width="1.800" height="1.800" fill="#e9d4ff"/><path d="M7 4.500 12.500 8 7 11.500Z" fill="#f3e6ff"/></svg><div class="t sb" style="left:132px;top:418px">Videos</div><svg style="position:absolute;left:202px;top:423px" width="12" height="12" viewBox="0 0 12 12"><path d="M7.200.8 11.200 4.800 10.300 5.700 9.600 5.500 7.700 7.400 7.600 9.900 6.700 10.800 4.300 8.400 1.300 11.400.6 10.700 3.600 7.700 1.200 5.300 2.100 4.400 4.600 4.300 6.500 2.400 6.300 1.700Z" fill="#9b9b9b"/></svg>
<svg style="position:absolute;left:111px;top:453px" width="16" height="14" viewBox="0 0 18 16"><path d="M0.5 2.6A1.6 1.6 0 0 1 2.1 1h4.2c.5 0 .9.2 1.2.5L9 3h6.9a1.6 1.6 0 0 1 1.6 1.6v8.8A1.6 1.6 0 0 1 15.900000000000002 15H2.1A1.6 1.6 0 0 1 .5 13.4Z" fill="#e9a825"/><path d="M.5 5.600000000000001A1.6 1.6 0 0 1 2.1 4H15.9a1.6 1.6 0 0 1 1.6 1.6v7.8A1.6 1.6 0 0 1 15.9 15H2.1A1.6 1.6 0 0 1 .5 13.4Z" fill="#fdd565"/></svg><div class="t sb" style="left:132px;top:450px">Mods</div><svg style="position:absolute;left:202px;top:455px" width="12" height="12" viewBox="0 0 12 12"><path d="M7.200.8 11.200 4.800 10.300 5.700 9.600 5.500 7.700 7.400 7.600 9.900 6.700 10.800 4.300 8.400 1.300 11.400.6 10.700 3.600 7.700 1.200 5.300 2.100 4.400 4.600 4.300 6.500 2.400 6.300 1.700Z" fill="#9b9b9b"/></svg>
<svg style="position:absolute;left:111px;top:485px" width="16" height="14" viewBox="0 0 18 16"><path d="M0.5 2.6A1.6 1.6 0 0 1 2.1 1h4.2c.5 0 .9.2 1.2.5L9 3h6.9a1.6 1.6 0 0 1 1.6 1.6v8.8A1.6 1.6 0 0 1 15.900000000000002 15H2.1A1.6 1.6 0 0 1 .5 13.4Z" fill="#e9a825"/><path d="M.5 5.600000000000001A1.6 1.6 0 0 1 2.1 4H15.9a1.6 1.6 0 0 1 1.6 1.6v7.8A1.6 1.6 0 0 1 15.9 15H2.1A1.6 1.6 0 0 1 .5 13.4Z" fill="#fdd565"/></svg><div class="t sb" style="left:132px;top:482px;width:70px;overflow:hidden">LE_Hubsteiger</div><svg style="position:absolute;left:202px;top:487px" width="12" height="12" viewBox="0 0 12 12"><path d="M7.200.8 11.200 4.800 10.300 5.700 9.600 5.500 7.700 7.400 7.600 9.900 6.700 10.800 4.300 8.400 1.300 11.400.6 10.700 3.600 7.700 1.200 5.300 2.100 4.400 4.600 4.300 6.500 2.400 6.300 1.700Z" fill="#9b9b9b"/></svg>
<svg style="position:absolute;left:111px;top:517px" width="16" height="14" viewBox="0 0 18 16"><path d="M0.5 2.6A1.6 1.6 0 0 1 2.1 1h4.2c.5 0 .9.2 1.2.5L9 3h6.9a1.6 1.6 0 0 1 1.6 1.6v8.8A1.6 1.6 0 0 1 15.900000000000002 15H2.1A1.6 1.6 0 0 1 .5 13.4Z" fill="#e9a825"/><path d="M.5 5.600000000000001A1.6 1.6 0 0 1 2.1 4H15.9a1.6 1.6 0 0 1 1.6 1.6v7.8A1.6 1.6 0 0 1 15.9 15H2.1A1.6 1.6 0 0 1 .5 13.4Z" fill="#fdd565"/></svg><div class="t sb" style="left:132px;top:514px">Command</div><svg style="position:absolute;left:202px;top:519px" width="12" height="12" viewBox="0 0 12 12"><path d="M7.200.8 11.200 4.800 10.300 5.700 9.600 5.500 7.700 7.400 7.600 9.900 6.700 10.800 4.300 8.400 1.300 11.400.6 10.700 3.600 7.700 1.200 5.300 2.100 4.400 4.600 4.300 6.500 2.400 6.300 1.700Z" fill="#9b9b9b"/></svg>
<svg style="position:absolute;left:111px;top:549px" width="16" height="14" viewBox="0 0 18 16"><path d="M0.5 2.6A1.6 1.6 0 0 1 2.1 1h4.2c.5 0 .9.2 1.2.5L9 3h6.9a1.6 1.6 0 0 1 1.6 1.6v8.8A1.6 1.6 0 0 1 15.900000000000002 15H2.1A1.6 1.6 0 0 1 .5 13.4Z" fill="#e9a825"/><path d="M.5 5.600000000000001A1.6 1.6 0 0 1 2.1 4H15.9a1.6 1.6 0 0 1 1.6 1.6v7.8A1.6 1.6 0 0 1 15.9 15H2.1A1.6 1.6 0 0 1 .5 13.4Z" fill="#fdd565"/></svg><div class="t sb" style="left:132px;top:546px">Strings</div><svg style="position:absolute;left:202px;top:551px" width="12" height="12" viewBox="0 0 12 12"><path d="M7.200.8 11.200 4.800 10.300 5.700 9.600 5.500 7.700 7.400 7.600 9.900 6.700 10.800 4.300 8.400 1.300 11.400.6 10.700 3.600 7.700 1.200 5.300 2.100 4.400 4.600 4.300 6.500 2.400 6.300 1.700Z" fill="#9b9b9b"/></svg>
<svg style="position:absolute;left:111px;top:581px" width="16" height="14" viewBox="0 0 18 16"><path d="M0.5 2.6A1.6 1.6 0 0 1 2.1 1h4.2c.5 0 .9.2 1.2.5L9 3h6.9a1.6 1.6 0 0 1 1.6 1.6v8.8A1.6 1.6 0 0 1 15.900000000000002 15H2.1A1.6 1.6 0 0 1 .5 13.4Z" fill="#e9a825"/><path d="M.5 5.600000000000001A1.6 1.6 0 0 1 2.1 4H15.9a1.6 1.6 0 0 1 1.6 1.6v7.8A1.6 1.6 0 0 1 15.9 15H2.1A1.6 1.6 0 0 1 .5 13.4Z" fill="#fdd565"/></svg><div class="t sb" style="left:132px;top:578px">Command</div><svg style="position:absolute;left:202px;top:583px" width="12" height="12" viewBox="0 0 12 12"><path d="M7.200.8 11.200 4.800 10.300 5.700 9.600 5.500 7.700 7.400 7.600 9.900 6.700 10.800 4.300 8.400 1.300 11.400.6 10.700 3.600 7.700 1.200 5.300 2.100 4.400 4.600 4.300 6.500 2.400 6.300 1.700Z" fill="#9b9b9b"/></svg>
<div class="abs" style="left:87px;top:621px;width:121px;height:1px;background:#3a3a3a"></div>
<div class="abs" style="left:80px;top:637px;width:136px;height:29px;background:#333;border-radius:4px 4px 0 0"></div>
<svg class="abs" style="left:90px;top:647px" width="8" height="10" viewBox="0 0 8 10"><path d="M2 1l4 4-4 4" fill="none" stroke="#9a9a9a" stroke-width="1.200"/></svg>
<svg style="position:absolute;left:110px;top:645px" width="18" height="16" viewBox="0 0 18 16"><defs><linearGradient id="pg" x1="0" y1="0" x2="1" y2="1"><stop offset="0" stop-color="#35c1f1"/><stop offset="1" stop-color="#1487d9"/></linearGradient></defs><rect x=".5" y=".5" width="17" height="11.500" rx="1.200" fill="url(#pg)"/><path d="M9 12v2.500M5.500 15h7" stroke="#cfd6dc" stroke-width="1.300"/></svg><div class="t sb" style="left:132px;top:642px;letter-spacing:-.5px">Dieser PC</div>
<div class="t hd" style="left:267px;top:223px">Name</div><svg class="abs" style="left:380px;top:222px" width="9" height="5" viewBox="0 0 9 5"><path d="M.5 4.500l4-4 4 4" fill="none" stroke="#a0a0a0" stroke-width="1"/></svg><div class="abs" style="left:508px;top:222px;width:1px;height:24px;background:#4a4a4a"></div><div class="abs" style="left:652px;top:222px;width:1px;height:24px;background:#4a4a4a"></div><div class="abs" style="left:772px;top:222px;width:1px;height:24px;background:#4a4a4a"></div><div class="abs" style="left:852px;top:222px;width:1px;height:24px;background:#4a4a4a"></div><div class="t hd" style="left:515px;top:223px">Änderungsdatum</div><div class="t hd" style="left:659px;top:223px">Typ</div><div class="t hd" style="left:779px;top:223px">Größe</div>
<svg style="position:absolute;left:257px;top:256px" width="13" height="16" viewBox="0 0 13 16"><path d="M.5.5h8l4 4v11H.5Z" fill="#f4f4f4" stroke="#9a9a9a" stroke-width="1"/><path d="M8.5.5v4h4" fill="#dcdcdc" stroke="#9a9a9a" stroke-width="1"/><path d="M2.500 4.500h4M2.500 6.500h8M2.500 8.500h8M2.500 10.500h8M2.500 12.500h8" stroke="#8c8c8c" stroke-width="1"/></svg><div class="t rw" style="left:275px;top:254px">Blaulicht</div><div class="t rw d" style="left:515px;top:254px">14.08.2024 14:00</div><div class="t rw ty" style="left:659px;top:254px">SCRIPT-Datei</div><div class="t rw" style="left:785px;width:60px;text-align:right;top:254px">2 KB</div>
<svg style="position:absolute;left:257px;top:284px" width="13" height="16" viewBox="0 0 13 16"><path d="M.5.5h8l4 4v11H.5Z" fill="#f4f4f4" stroke="#9a9a9a" stroke-width="1"/><path d="M8.5.5v4h4" fill="#dcdcdc" stroke="#9a9a9a" stroke-width="1"/><path d="M2.500 4.500h4M2.500 6.500h8M2.500 8.500h8M2.500 10.500h8M2.500 12.500h8" stroke="#8c8c8c" stroke-width="1"/></svg><div class="t rw" style="left:275px;top:282px">entercar</div><div class="t rw d" style="left:515px;top:282px">14.08.2024 14:00</div><div class="t rw ty" style="left:659px;top:282px">SCRIPT-Datei</div><div class="t rw" style="left:785px;width:60px;text-align:right;top:282px">7 KB</div>
<div class="abs" style="left:251px;top:309px;width:599px;height:23px;background:#333;border-radius:3px"></div><svg style="position:absolute;left:257px;top:312px" width="13" height="16" viewBox="0 0 13 16"><path d="M.5.5h8l4 4v11H.5Z" fill="#f4f4f4" stroke="#9a9a9a" stroke-width="1"/><path d="M8.5.5v4h4" fill="#dcdcdc" stroke="#9a9a9a" stroke-width="1"/><path d="M2.500 4.500h4M2.500 6.500h8M2.500 8.500h8M2.500 10.500h8M2.500 12.500h8" stroke="#8c8c8c" stroke-width="1"/></svg><div class="t rw" style="left:275px;top:310px">Kennungen</div><div class="t rw d" style="left:515px;top:310px">09.09.2024 17:56</div><div class="t rw ty" style="left:659px;top:310px">SCRIPT-Datei</div><div class="t rw" style="left:785px;width:60px;text-align:right;top:310px">25 KB</div>
<svg style="position:absolute;left:257px;top:340px" width="13" height="16" viewBox="0 0 13 16"><path d="M.5.5h8l4 4v11H.5Z" fill="#f4f4f4" stroke="#9a9a9a" stroke-width="1"/><path d="M8.5.5v4h4" fill="#dcdcdc" stroke="#9a9a9a" stroke-width="1"/><path d="M2.500 4.500h4M2.500 6.500h8M2.500 8.500h8M2.500 10.500h8M2.500 12.500h8" stroke="#8c8c8c" stroke-width="1"/></svg><div class="t rw" style="left:275px;top:338px">TMF_Logik</div><div class="t rw d" style="left:515px;top:338px">08.09.2024 18:31</div><div class="t rw ty" style="left:659px;top:338px">SCRIPT-Datei</div><div class="t rw" style="left:785px;width:60px;text-align:right;top:338px">17 KB</div>
<svg style="position:absolute;left:257px;top:368px" width="13" height="16" viewBox="0 0 13 16"><path d="M.5.5h8l4 4v11H.5Z" fill="#f4f4f4" stroke="#9a9a9a" stroke-width="1"/><path d="M8.5.5v4h4" fill="#dcdcdc" stroke="#9a9a9a" stroke-width="1"/><path d="M2.500 4.500h4M2.500 6.500h8M2.500 8.500h8M2.500 10.500h8M2.500 12.500h8" stroke="#8c8c8c" stroke-width="1"/></svg><div class="t rw" style="left:275px;top:366px">Umfeld_LM</div><div class="t rw d" style="left:515px;top:366px">14.08.2024 14:00</div><div class="t rw ty" style="left:659px;top:366px">SCRIPT-Datei</div><div class="t rw" style="left:785px;width:60px;text-align:right;top:366px">2 KB</div>
<svg style="position:absolute;left:257px;top:396px" width="13" height="16" viewBox="0 0 13 16"><path d="M.5.5h8l4 4v11H.5Z" fill="#f4f4f4" stroke="#9a9a9a" stroke-width="1"/><path d="M8.5.5v4h4" fill="#dcdcdc" stroke="#9a9a9a" stroke-width="1"/><path d="M2.500 4.500h4M2.500 6.500h8M2.500 8.500h8M2.500 10.500h8M2.500 12.500h8" stroke="#8c8c8c" stroke-width="1"/></svg><div class="t rw" style="left:275px;top:394px">VCmdSiren</div><div class="t rw d" style="left:515px;top:394px">14.08.2024 14:00</div><div class="t rw ty" style="left:659px;top:394px">SCRIPT-Datei</div><div class="t rw" style="left:785px;width:60px;text-align:right;top:394px">14 KB</div>
<svg style="position:absolute;left:257px;top:424px" width="13" height="16" viewBox="0 0 13 16"><path d="M.5.5h8l4 4v11H.5Z" fill="#f4f4f4" stroke="#9a9a9a" stroke-width="1"/><path d="M8.5.5v4h4" fill="#dcdcdc" stroke="#9a9a9a" stroke-width="1"/><path d="M2.500 4.500h4M2.500 6.500h8M2.500 8.500h8M2.500 10.500h8M2.500 12.500h8" stroke="#8c8c8c" stroke-width="1"/></svg><div class="t rw" style="left:275px;top:422px">WarningLights</div><div class="t rw d" style="left:515px;top:422px">14.08.2024 14:00</div><div class="t rw ty" style="left:659px;top:422px">SCRIPT-Datei</div><div class="t rw" style="left:785px;width:60px;text-align:right;top:422px">2 KB</div>
<div class="t st" style="left:91px;top:667px;letter-spacing:-.27px">7 Elemente</div><div class="abs" style="left:159px;top:671px;width:1px;height:12px;background:#e0e0e0"></div><div class="t st" style="left:170px;top:667px;letter-spacing:-.28px">1 Element ausgewählt (24,3 KB)</div><div class="abs" style="left:344px;top:671px;width:1px;height:12px;background:#e0e0e0"></div>
<svg class="abs" style="left:1151px;top:666px" width="44" height="23" viewBox="0 0 44 23"><rect x=".5" y=".5" width="21" height="22" fill="#686868" stroke="#7a7a7a"/><rect x="4" y="4" width="15" height="15" rx="1" fill="#cdcdcd"/><path d="M6 7.500h11M6 10.500h11M6 13.500h11M6 16.500h11" stroke="#111" stroke-width="1"/><rect x="25.500" y="4" width="15" height="14.500" fill="none" stroke="#d8d8d8" stroke-width="1.400"/><rect x="27.500" y="6" width="11" height="8" fill="#fff"/><path d="M27 16.200h12" stroke="#d8d8d8" stroke-width="1"/></svg>
</div>
<div id="dlg" class="abs" style="left:815px;top:479px;width:296px;height:126px;border-radius:8px;background:#fff;overflow:hidden;box-shadow:0 0 0 1px rgba(120,120,120,.55),0 10px 28px rgba(0,0,0,.5)">
<div class="abs" style="left:0;top:0;width:296px;height:25px;background:#ebf3f8"></div>
<div class="t" style="left:4px;top:2px;font-size:12px;color:#000;letter-spacing:-.15px">Script Error</div>
<svg class="abs" style="left:276px;top:7px" width="11" height="11" viewBox="0 0 11 11"><path d="M.5.500l10 10M10.500.5l-10 10" stroke="#a3a8ab" stroke-width="1"/></svg>
<div class="t" style="left:11px;top:44px;font-size:11.200px;color:#000">(_Kennungen919eb): !!!Error recovered!!!</div>
<div class="abs" style="left:0;top:84px;width:296px;height:42px;background:#f0f0f0"></div>
<div class="btn" style="left:27px">A<u>b</u>brechen</div>
<div class="btn def" style="left:114px"><span class="foc"></span>Wieder<u>h</u>olen</div>
<div class="btn" style="left:201px"><u>I</u>gnorieren</div>
</div>
<div id="bdc" class="abs" style="left:1296px;top:232px;width:620px;height:570px;background:#1d2128"></div>
<div class="abs" style="left:1297px;top:233px;width:618px;height:568px;background:#414b58"></div>
<!-- title -->
<div class="t" style="left:1306px;top:239px;font-size:12.600px;font-weight:bold;color:#e9e9e9;transform:scaleX(1.270);transform-origin:0 50%;letter-spacing:-.1px">BANDI<span style="color:#ef4340">CAM</span></div>
<div class="abs" style="left:1402px;top:241px;width:38px;height:16px;background:#2d343f"></div>
<div class="t" style="left:1402px;top:238px;width:38px;text-align:center;font-size:9px;color:#d4d7db;letter-spacing:-.2px">ADMIN</div>
<svg class="abs" style="left:1723px;top:238px" width="15" height="14" viewBox="0 0 15 14"><path d="M.5 2A1.500 1.500 0 0 1 2 .5h3.500l1.500 1.500H11A1.500 1.500 0 0 1 12.500 3.500v1.500H4L1.500 11H.5Z" fill="#8d949d"/><path d="M4.300 5.800H14.500L12 12.500H1.500Z" fill="#8d949d"/></svg>
<svg class="abs" style="left:1755px;top:238px" width="14" height="14" viewBox="0 0 14 14"><circle cx="7" cy="7" r="6.500" fill="#8d949d"/><path d="M7 3v4.300h3.500" fill="none" stroke="#414b58" stroke-width="1.500"/></svg>
<div class="t" style="left:1790px;top:234px;font-size:15px;font-weight:bold;color:#8d949d">?</div>
<div class="abs" style="left:1829px;top:248px;width:4px;height:2px;background:#8d949d"></div>
<div class="abs" style="left:1858px;top:248px;width:10px;height:2px;background:#8d949d"></div>
<svg class="abs" style="left:1892px;top:240px" width="11" height="11" viewBox="0 0 11 11"><path d="M1 1l9 9M10 1l-9 9" stroke="#b9bec5" stroke-width="1.500"/></svg>
<!-- mode row -->
<div class="abs" style="left:1297px;top:265px;width:618px;height:54px;background:#252b34"></div>
<div class="abs" style="left:1297px;top:265px;width:72px;height:54px;background:#3a97f0"></div>
<div class="abs" style="left:1370px;top:265px;width:14px;height:54px;background:#3a97f0"></div>
<div class="abs" style="left:1385px;top:265px;width:72px;height:54px;background:#40668f"></div>
<div class="abs" style="left:1458px;top:265px;width:72px;height:54px;background:#40668f"></div>
<div class="abs" style="left:1536px;top:270px;width:60px;height:44px;background:#1f242c"></div>
<svg class="abs" style="left:1319px;top:281px" width="28" height="24" viewBox="0 0 28 24"><rect x="1.500" y="1.500" width="25" height="16" fill="none" stroke="#fff" stroke-width="2.400"/><path d="M12 19h4l1 3h3v1.500H8V22h3z" fill="#fff"/></svg>
<svg class="abs" style="left:1373px;top:289px" width="8" height="6" viewBox="0 0 8 6"><path d="M1 1l3 3 3-3" fill="none" stroke="#fff" stroke-width="1.500"/></svg>
<svg class="abs" style="left:1407px;top:282px" width="28" height="20" viewBox="0 0 28 20"><rect x=".5" y=".5" width="27" height="10" rx="2.500" fill="#a9bbd0"/><circle cx="13.500" cy="5.500" r="3.300" fill="none" stroke="#40668f" stroke-width="1.200"/><circle cx="13.500" cy="5.500" r="1.300" fill="#40668f"/><circle cx="21" cy="3.300" r="1" fill="#40668f"/><text x="14" y="19.500" text-anchor="middle" font-family="Liberation Sans,sans-serif" font-weight="bold" font-size="8" textLength="26" lengthAdjust="spacingAndGlyphs" fill="#a9bbd0">HDMI</text></svg>
<svg class="abs" style="left:1480px;top:282px" width="28" height="20" viewBox="0 0 28 20"><path d="M7 1.500C9 .6 11 2 14 2s5-1.400 7-.5c3.500 1.500 5.500 9 5.500 14 0 2.500-2.300 3.500-4 2L19 14H9l-3.500 3.500c-1.700 1.500-4 .5-4-2C1.500 10.500 3.500 3 7 1.500Z" fill="#a9bbd0"/><circle cx="8.500" cy="8" r="2.400" fill="none" stroke="#40668f" stroke-width="1.300"/><circle cx="18" cy="8" r=".9" fill="#40668f"/><circle cx="22" cy="8" r=".9" fill="#40668f"/><circle cx="20" cy="6" r=".9" fill="#40668f"/><circle cx="20" cy="10" r=".9" fill="#40668f"/></svg>
<svg class="abs" style="left:1556px;top:281px" width="32" height="26" viewBox="0 0 32 26"><circle cx="10" cy="9" r="7.500" fill="#59616c"/><circle cx="10" cy="9" r="4.200" fill="#1f242c"/><circle cx="10" cy="9" r="2.300" fill="#59616c"/><path d="M1 21c1-4 4-6 9-6s8 2 9 6z" fill="#59616c"/><path d="M22 17l7 7M29 17l-7 7" stroke="#e8e8e8" stroke-width="1.400"/></svg>
<svg class="abs" style="left:1609px;top:283px" width="20" height="18" viewBox="0 0 20 18"><path d="M1 6h3.500L9.500 1.500v15L4.500 12H1z" fill="#e6e6e6"/><path d="M12 5.500a4.500 4.500 0 0 1 0 7M14 2.500a8 8 0 0 1 0 13" fill="none" stroke="#e6e6e6" stroke-width="1.700" stroke-linecap="round"/></svg>
<svg class="abs" style="left:1614px;top:306px" width="10" height="5" viewBox="0 0 10 5"><path d="M1 .5l4 3.500 4-3.500" fill="none" stroke="#9098a3" stroke-width="1"/></svg>
<div class="abs" style="left:1639px;top:279px;width:3px;height:26px;background:repeating-linear-gradient(#1d4a73 0 2px,transparent 2px 3px)"></div>
<svg class="abs" style="left:1654px;top:282px" width="16" height="20" viewBox="0 0 16 20"><rect x="4" y=".5" width="8" height="12" rx="4" fill="#5a626d"/><path d="M1.500 9a6.500 6.500 0 0 0 13 0M8 15.500V19M4.500 19h7" fill="none" stroke="#5a626d" stroke-width="1.400"/><path d="M4.500 4h7M4.500 6.500h7M4.500 9h7" stroke="#252b34" stroke-width=".8"/></svg>
<svg class="abs" style="left:1657px;top:306px" width="10" height="5" viewBox="0 0 10 5"><path d="M1 .5l4 3.500 4-3.500" fill="none" stroke="#9098a3" stroke-width="1"/></svg>
<svg class="abs" style="left:1672px;top:298px" width="8" height="8" viewBox="0 0 8 8"><path d="M.5.500l7 7M7.500.5l-7 7" stroke="#e8e8e8" stroke-width="1.300"/></svg>
<div class="abs" style="left:1682px;top:279px;width:3px;height:26px;background:repeating-linear-gradient(#7a4a12 0 2px,transparent 2px 3px)"></div>
<svg class="abs" style="left:1697px;top:282px" width="20" height="20" viewBox="0 0 20 20"><path d="M3.300 12.500A7 7 0 1 1 15.500 8" fill="none" stroke="#565e69" stroke-width="1.600"/><path d="M6.300 10.800A3.800 3.800 0 1 1 12.500 8" fill="none" stroke="#565e69" stroke-width="1.500"/><path d="M9 8l8.500 6.500-4 .5 2.200 3.800-1.700 1-2.200-3.900-2.800 2.600z" fill="#565e69"/></svg>
<div class="abs" style="left:1727px;top:279px;width:1px;height:26px;background:#39414c"></div>
<div class="t" style="left:1740px;top:279px;font-family:'Liberation Serif',serif;font-weight:bold;font-size:25px;height:26px;line-height:26px;color:#565e69">T</div>
<div class="abs" style="left:1772px;top:270px;width:1px;height:44px;background:#39414c"></div>
<div class="abs" style="left:1788px;top:284px;width:4px;height:16px;background:#565e69"></div>
<div class="abs" style="left:1797px;top:284px;width:4px;height:16px;background:#565e69"></div>
<div class="abs" style="left:1813px;top:259px;width:66px;height:66px;border-radius:50%;background:#414b58"></div>
<div class="abs" style="left:1297px;top:233px;width:618px;height:32px;background:none"></div>
<div class="abs" style="left:1818.500px;top:264.500px;width:55px;height:55px;border-radius:50%;background:linear-gradient(#f55255,#d93b40)"></div>
<div class="t" style="left:1818px;top:281px;width:56px;text-align:center;font-size:16.800px;height:22px;line-height:22px;font-weight:bold;color:#fff;letter-spacing:-.6px">REC</div>
<svg class="abs" style="left:1886px;top:283px" width="22" height="18" viewBox="0 0 22 18"><path d="M1 4.500A1.500 1.500 0 0 1 2.500 3H6L7.500.8h6L15 3h4.500A1.500 1.500 0 0 1 21 4.500V15.500A1.500 1.500 0 0 1 19.500 17H2.500A1.500 1.500 0 0 1 1 15.500Z" fill="#d9dce0"/><circle cx="10.500" cy="10" r="4.600" fill="#252b34"/><circle cx="10.500" cy="10" r="2.600" fill="#d9dce0"/><circle cx="18" cy="6.500" r="1.800" fill="#ef2d2d"/></svg>
<!-- info row -->
<svg class="abs" style="left:1308px;top:329px" width="15" height="15" viewBox="0 0 15 15"><rect x=".5" y=".5" width="14" height="14" fill="none" stroke="#e8e8e8" stroke-width="1" stroke-dasharray="2.500 1.500"/></svg>
<div class="t" style="left:1331px;top:325px;font-size:12px;color:#f0f0f0;letter-spacing:-.3px">1920x1080 - (0, 0), (1920, 1080) - Bildschirm 1</div>
<svg class="abs" style="left:1789px;top:330px" width="16" height="12" viewBox="0 0 16 12"><rect x=".5" y=".5" width="11" height="11" rx="2" fill="#b6bcc4"/><path d="M11 5l4.500-3v8L11 7z" fill="#b6bcc4"/><path d="M3.500 3l5 3-5 3z" fill="#414b58"/></svg>
<svg class="abs" style="left:1819px;top:330px" width="18" height="14" viewBox="0 0 18 14"><rect x=".7" y=".7" width="14" height="10" fill="none" stroke="#b6bcc4" stroke-width="1.400"/><path d="M2 9.500l3.500-4 2.500 2.500 2-1.500 3.500 3z" fill="#b6bcc4"/><circle cx="15.200" cy="11" r="2.200" fill="#f0454a"/></svg>
<svg class="abs" style="left:1848px;top:330px" width="17" height="12" viewBox="0 0 17 12"><path d="M3.500 1a7 7 0 0 0 0 10M13.500 1a7 7 0 0 1 0 10M6 3.200a4 4 0 0 0 0 5.600M11 3.200a4 4 0 0 1 0 5.600" fill="none" stroke="#b6bcc4" stroke-width="1.300"/><rect x="7.500" y="4.500" width="2" height="3" fill="#b6bcc4"/></svg>
<div class="abs" style="left:1878px;top:328px;width:1px;height:16px;background:#5a6472"></div>
<svg class="abs" style="left:1890px;top:332px" width="14" height="8" viewBox="0 0 14 8"><path d="M1 7l6-5.500L13 7" fill="none" stroke="#c4c9d0" stroke-width="1.400"/></svg>
<!-- panel -->
<div class="abs" style="left:1306px;top:351px;width:600px;height:415px;background:#343b48;border:1px solid #4a5462"></div>
<div class="abs" style="left:1307px;top:352px;width:140px;height:413px;background:#252b36"></div>
<div class="abs" style="left:1308px;top:353px;width:2px;height:49px;background:#3a97f0"></div>
<svg class="abs" style="left:1320px;top:369px" width="17" height="17" viewBox="0 0 17 17"><path d="M8.500.5 16.500 8.300H14V16.500H10.300V11H6.700V16.500H3V8.300H.5Z" fill="#fff"/></svg>
<div class="t" style="left:1344px;top:367px;font-size:12px;color:#fff;letter-spacing:-.1px">Start</div>
<svg class="abs" style="left:1320px;top:419px" width="17" height="17" viewBox="0 0 17 17"><circle cx="8.500" cy="8.500" r="4.600" fill="none" stroke="#7f8791" stroke-width="3"/><path d="M8.500 0v17M0 8.500h17M2.500 2.500l12 12M14.500 2.500l-12 12" stroke="#7f8791" stroke-width="2.400" stroke-dasharray="2.600 11.800"/><circle cx="8.500" cy="8.500" r="2" fill="#252b36"/></svg>
<div class="t nv" style="left:1344px;top:417px">Allgemein</div>
<svg class="abs" style="left:1320px;top:469px" width="19" height="18" viewBox="0 0 19 18"><path d="M.7 10.500V.7h13v5" fill="none" stroke="#7f8791" stroke-width="1.300"/><path d="M.7 10.500H6" stroke="#7f8791" stroke-width="1.300"/><path d="M4.500 3l4 2.500-4 2.500z" fill="#7f8791"/><circle cx="12.500" cy="12" r="3" fill="none" stroke="#7f8791" stroke-width="2"/><path d="M12.500 6.800v10.400M7.300 12h10.400M8.800 8.300l7.400 7.400M16.200 8.300l-7.400 7.400" stroke="#7f8791" stroke-width="1.700" stroke-dasharray="1.800 6.800"/></svg>
<div class="t nv" style="left:1344px;top:467px">Video</div>
<svg class="abs" style="left:1320px;top:519px" width="19" height="18" viewBox="0 0 19 18"><path d="M.7 10.500V.7h13v5" fill="none" stroke="#7f8791" stroke-width="1.300"/><path d="M.7 10.500H6" stroke="#7f8791" stroke-width="1.300"/><path d="M2 9l3-4 2 2 1.500-1.500L10 7v2z" fill="#7f8791"/><circle cx="12.500" cy="12" r="3" fill="none" stroke="#7f8791" stroke-width="2"/><path d="M12.500 6.800v10.400M7.300 12h10.400M8.800 8.300l7.400 7.400M16.200 8.300l-7.400 7.400" stroke="#7f8791" stroke-width="1.700" stroke-dasharray="1.800 6.800"/></svg>
<div class="t nv" style="left:1344px;top:517px">Bild</div>
<svg class="abs" style="left:1320px;top:569px" width="17" height="17" viewBox="0 0 17 17"><circle cx="8.500" cy="8.500" r="8.300" fill="#7f8791"/><circle cx="8.500" cy="4.300" r="1.500" fill="#252b36"/><path d="M6.300 7h3.500v5.500h1.200V14H6V12.500h1.300V8.500H6.300z" fill="#252b36"/></svg>
<div class="t nv" style="left:1344px;top:567px">Über Bandicam</div>
<div class="abs" style="left:1320px;top:720px;width:114px;height:25px;border:1px solid #6a7380"></div>
<div class="t" style="left:1331px;top:722px;font-size:11.500px;font-weight:bold;color:#7f8791;transform:scaleX(1.280);transform-origin:0 50%;letter-spacing:-.2px">BANDI<span style="color:#4b6f9a">CUT</span></div>
<svg class="abs" style="left:1417px;top:727px" width="10" height="10" viewBox="0 0 10 10"><path d="M1 9l8-8M3 1h6v6" fill="none" stroke="#7f8791" stroke-width="1.200"/></svg>
<!-- tabs -->
<div class="t" style="left:1477px;top:369px;font-size:12.300px;color:#fff;font-weight:500">Aufnahme</div>
<div class="t tab2" style="left:1573px;top:369px">Videos</div>
<div class="t tab2" style="left:1650px;top:369px">Bilder</div>
<div class="t tab2" style="left:1720px;top:369px">Audios</div>
<div class="abs" style="left:1553px;top:374px;width:1px;height:12px;background:#505a68"></div>
<div class="abs" style="left:1629px;top:374px;width:1px;height:12px;background:#505a68"></div>
<div class="abs" style="left:1700px;top:374px;width:1px;height:12px;background:#505a68"></div>
<div class="abs" style="left:1467px;top:398px;width:418px;height:1px;background:#4c5664"></div>
<!-- mode buttons -->
<div class="abs mb" style="left:1467px;width:32px"></div>
<div class="abs mb" style="left:1500px"></div>
<div class="abs mb" style="left:1555px;background:#3a97f0"></div>
<div class="abs mb" style="left:1610px"></div>
<div class="abs mb" style="left:1665px"></div>
<div class="abs mb" style="left:1720px"></div>
<div class="abs mb" style="left:1775px"></div>
<div class="abs mb" style="left:1830px"></div>
<svg class="abs" style="left:1475px;top:430px" width="16" height="14" viewBox="0 0 16 14"><path d="M15 7H2M7.500 1.500 2 7l5.500 5.500" fill="none" stroke="#aeb4bc" stroke-width="1.500"/></svg>
<svg class="abs" style="left:1515px;top:428px" width="26" height="18" viewBox="0 0 26 18"><path d="M12 12.500H1.500V1.500H19.500V8" fill="none" stroke="#9aa1aa" stroke-width="1.800"/><path d="M13 7l9.500 9.500M13 7v5M13 7h5M22.500 16.500v-5M22.500 16.500h-5" fill="none" stroke="#9aa1aa" stroke-width="1.600"/></svg>
<svg class="abs" style="left:1570px;top:428px" width="24" height="19" viewBox="0 0 24 19"><rect x="1.200" y="1.200" width="21.600" height="12.600" fill="none" stroke="#fff" stroke-width="2.400"/><path d="M10 15h4l1 2.500h2V19H7v-1.500h2z" fill="#fff"/></svg>
<svg class="abs" style="left:1624px;top:428px" width="26" height="20" viewBox="0 0 26 20"><path d="M11 13.500H1.500V1.500H20.500V6" fill="none" stroke="#9aa1aa" stroke-width="1.800"/><path d="M6 17h6" stroke="#9aa1aa" stroke-width="1.600"/><rect x="14.500" y="10.500" width="10" height="8.500" fill="#9aa1aa"/><path d="M17 10.500V8.300a2.500 2.500 0 0 1 5 0v2.200" fill="none" stroke="#9aa1aa" stroke-width="1.500"/><rect x="19" y="13.500" width="1.500" height="3" fill="#414b58"/></svg>
<svg class="abs" style="left:1680px;top:428px" width="24" height="19" viewBox="0 0 24 19"><rect x="1" y="1" width="20" height="13" fill="none" stroke="#9aa1aa" stroke-width="1.600" stroke-dasharray="2.500 1.600"/><path d="M11 5l9 6.500-4 .7 2.300 4.300-1.800 1-2.300-4.400-3.200 2.700z" fill="#9aa1aa"/></svg>
<svg class="abs" style="left:1735px;top:428px" width="24" height="18" viewBox="0 0 24 18"><rect x=".5" y=".5" width="23" height="9" rx="2.200" fill="#9aa1aa"/><circle cx="11.500" cy="5" r="2.800" fill="none" stroke="#414b58" stroke-width="1.100"/><circle cx="11.500" cy="5" r="1.100" fill="#414b58"/><circle cx="18" cy="3" r=".9" fill="#414b58"/><text x="12" y="17.300" text-anchor="middle" font-family="Liberation Sans,sans-serif" font-weight="bold" font-size="7" textLength="22" lengthAdjust="spacingAndGlyphs" fill="#9aa1aa">HDMI</text></svg>
<svg class="abs" style="left:1790px;top:429px" width="24" height="17" viewBox="0 0 28 20"><path d="M7 1.500C9 .6 11 2 14 2s5-1.400 7-.5c3.500 1.500 5.500 9 5.500 14 0 2.500-2.300 3.500-4 2L19 14H9l-3.500 3.500c-1.700 1.500-4 .5-4-2C1.500 10.500 3.500 3 7 1.500Z" fill="#9aa1aa"/><circle cx="8.500" cy="8" r="2.400" fill="none" stroke="#414b58" stroke-width="1.300"/><circle cx="18" cy="8" r=".9" fill="#414b58"/><circle cx="22" cy="8" r=".9" fill="#414b58"/><circle cx="20" cy="6" r=".9" fill="#414b58"/><circle cx="20" cy="10" r=".9" fill="#414b58"/></svg>
<svg class="abs" style="left:1843px;top:428px" width="28" height="19" viewBox="0 0 28 19"><path d="M4.500 1a12 12 0 0 0 0 17M23.500 1a12 12 0 0 1 0 17M8 3.500a8 8 0 0 0 0 12M20 3.500a8 8 0 0 1 0 12" fill="none" stroke="#9aa1aa" stroke-width="1.500"/><rect x="11.200" y="2.500" width="5.600" height="9.500" rx="2.800" fill="#9aa1aa"/><path d="M9.500 9.500a4.500 4.500 0 0 0 9 0M14 14v2.500M11.500 17h5" fill="none" stroke="#9aa1aa" stroke-width="1.200"/></svg>
<!-- text -->
<div class="t" style="left:1482px;top:482px;font-size:15.200px;color:#fff">Aufnahmemodus 'Bildschirm' - Vollbild</div>
<div class="t bp" style="left:1482px;top:511px;letter-spacing:.05px">Mit diesem Aufnahmemodus wird der gesamte Bildschirm</div>
<div class="t bp" style="left:1482px;top:530px;letter-spacing:.1px">aufgenommen.</div>
<div class="t bp" style="left:1482px;top:557px;letter-spacing:-.12px">1. Wähle einen Bildschirm.</div>
<div class="t bp" style="left:1482px;top:576px;letter-spacing:-.22px">2. Klicke auf 'REC' oder drücke Tastenkürzel.</div>
<div class="abs" style="left:1482px;top:619px;width:148px;height:41px;background:#252b36;border:1px solid #56606e"></div>
<div class="abs" style="left:1491px;top:626.500px;width:27px;height:27px;border-radius:50%;background:linear-gradient(#f04e48,#d43a3a)"></div>
<div class="t" style="left:1491px;top:629px;width:27px;text-align:center;font-size:9px;font-weight:bold;color:#fff;letter-spacing:-.5px">REC</div>
<div class="t" style="left:1524px;top:629px;font-size:12px;color:#fff">Aufnahme - Start</div>
<div class="t" style="left:1660px;top:629px;font-size:12.400px;color:#e2e5e9;text-decoration:underline">Online-Hilfe</div>
<svg class="abs kb" style="left:1482px;top:691px" width="15" height="11" viewBox="0 0 15 11"><rect x=".6" y=".6" width="13.800" height="9.800" fill="none" stroke="#e0e3e7" stroke-width="1.200"/><path d="M3 3.500h9M3 5.500h9" stroke="#e0e3e7" stroke-width="1" stroke-dasharray="1 1"/><path d="M4 8h7" stroke="#e0e3e7" stroke-width="1"/></svg>
<div class="t bp" style="left:1504px;top:686px">Start/Stopp</div>
<svg class="abs kb" style="left:1692px;top:691px" width="15" height="11" viewBox="0 0 15 11"><rect x=".6" y=".6" width="13.800" height="9.800" fill="none" stroke="#e0e3e7" stroke-width="1.200"/><path d="M3 3.500h9M3 5.500h9" stroke="#e0e3e7" stroke-width="1" stroke-dasharray="1 1"/><path d="M4 8h7" stroke="#e0e3e7" stroke-width="1"/></svg>
<div class="t bp" style="left:1714px;top:686px;letter-spacing:-.2px">Screenshot</div>
<div class="abs" style="left:1482px;top:710px;width:180px;height:25px;background:#414b58"></div>
<div class="abs" style="left:1692px;top:710px;width:178px;height:25px;background:#414b58"></div>
<div class="t bp" style="left:1488px;top:712px">.</div>
<div class="t bp" style="left:1697px;top:712px">,</div>
<svg class="abs" style="left:1413px;top:776px" width="17" height="15" viewBox="0 0 17 15"><path d="M1.500.5h14a1 1 0 0 1 1 1v8a1 1 0 0 1-1 1H12.500v3.500L8.500 10.500h-7a1 1 0 0 1-1-1v-8a1 1 0 0 1 1-1z" fill="#b3b9c1"/><rect x="3.500" y="4.500" width="2" height="2" fill="#414b58"/><rect x="7.500" y="4.500" width="2" height="2" fill="#414b58"/><rect x="11.500" y="4.500" width="2" height="2" fill="#414b58"/></svg>
<div class="t" style="left:1441px;top:772px;font-size:12px;color:#c7ccd2;letter-spacing:-.08px">Hardware-beschleunigende H.264 Video-Codecs werden unterstützt</div>
<!-- compass -->
<div class="abs" style="left:1819px;top:930px;width:1px;height:100px;background:#fff"></div>
<div class="abs" style="left:1770px;top:980px;width:100px;height:1px;background:#fff"></div>
<div class="t cp" style="left:1819px;top:926px">E</div>
<div class="t cp" style="left:1770px;top:976px">N</div>
<div class="t cp" style="left:1869.500px;top:976px">S</div>
<!-- taskbar -->
<div id="taskbar" class="abs" style="left:0;top:1032px;width:1920px;height:48px;background:#132c30;border-top:1px solid #3d4a4d"></div>
<svg class="abs" style="left:17px;top:1045px" width="28" height="26" viewBox="0 0 28 26"><defs><linearGradient id="cl" x1="0" y1="0" x2="0" y2="1"><stop offset="0" stop-color="#e6eefc"/><stop offset="1" stop-color="#9fb6ea"/></linearGradient></defs><path d="M7 16.500a5 5 0 0 1 .6-10A7 7 0 0 1 21 5.500a5.500 5.500 0 0 1 .5 11z" fill="url(#cl)"/><path d="M9.500 14.500c1.600 2 2.600 3.500 2.600 5a2.600 2.600 0 0 1-5.200 0c0-1.500 1-3 2.600-5zM18 14.500c1.600 2 2.600 3.500 2.600 5a2.600 2.600 0 0 1-5.200 0c0-1.500 1-3 2.600-5z" fill="#2563eb"/></svg>
<div class="t" style="left:50px;top:1038px;font-size:11.500px;color:#fff">19°C</div>
<div class="t" style="left:50px;top:1054px;font-size:12px;color:#dfe3e4">Regen</div>
<svg class="abs" style="left:507px;top:1045px" width="23" height="23" viewBox="0 0 24 24"><defs><linearGradient id="wl" x1="0" y1="0" x2="1" y2="1"><stop offset="0" stop-color="#6fd6ff"/><stop offset="1" stop-color="#1d9bf0"/></linearGradient></defs><rect x="0" y="0" width="11.300" height="11.300" rx="1" fill="url(#wl)"/><rect x="12.700" y="0" width="11.300" height="11.300" rx="1" fill="url(#wl)"/><rect x="0" y="12.700" width="11.300" height="11.300" rx="1" fill="url(#wl)"/><rect x="12.700" y="12.700" width="11.300" height="11.300" rx="1" fill="url(#wl)"/></svg>
<div class="abs" style="left:543px;top:1040px;width:220px;height:32px;border-radius:16px;background:#34494c;border:1px solid #4a5d60"></div>
<svg class="abs" style="left:554px;top:1048px" width="16" height="16" viewBox="0 0 16 16"><circle cx="6.800" cy="6.800" r="5.300" fill="none" stroke="#f0f0f0" stroke-width="1.500"/><path d="M10.800 10.800l4.200 4.200" stroke="#f0f0f0" stroke-width="1.700" stroke-linecap="round"/></svg>
<div class="t" style="left:580px;top:1046px;font-size:13px;color:#e4e7e8">Suche</div>
<svg class="abs" style="left:713px;top:1044px" width="44" height="24" viewBox="0 0 44 24"><path d="M4 10c2-5 6-6 9-4l8 3c5 1 10 0 15-1 3-.5 5 1 4 3-2-1.500-5-.5-9 1-6 2-10 5-16 7-3 1-6-2-7-5z" fill="#c9bfd8"/><path d="M4 10l3-4 1 4z" fill="#b7a9cc"/><circle cx="3.500" cy="14" r="1.800" fill="#bfe9f2"/><circle cx="24" cy="4" r="1.800" fill="#bfe9f2"/><circle cx="19" cy="6" r="1" fill="#bfe9f2"/><circle cx="31" cy="18" r="1.500" fill="#bfe9f2"/><path d="M12 13c4 1 8 0 12-2l-9 7c-3 1-5-2-3-5z" fill="#9f95c0"/></svg>
<!-- icons -->
<svg class="abs" style="left:774px;top:1044px" width="26" height="24" viewBox="0 0 26 24"><rect x="1" y="7" width="16" height="14" rx="1.500" fill="#6d7173"/><rect x="7" y="1" width="17" height="14" rx="1.500" fill="#e6e6e6"/></svg>
<svg class="abs" style="left:818px;top:1043px" width="26" height="24" viewBox="0 0 26 24"><path d="M1 3.500A1.500 1.500 0 0 1 2.500 2h7l2.500 2.500h11.500A1.500 1.500 0 0 1 25 6v14.500A1.500 1.500 0 0 1 23.500 22h-21A1.500 1.500 0 0 1 1 20.500z" fill="#e8a825"/><path d="M1 8A1.500 1.500 0 0 1 2.500 6.500h21A1.500 1.500 0 0 1 25 8v12.500A1.500 1.500 0 0 1 23.500 22h-21A1.500 1.500 0 0 1 1 20.500z" fill="#fcd35e"/><path d="M6.500 22v-5.500A1.500 1.500 0 0 1 8 15h10a1.500 1.500 0 0 1 1.500 1.500V22z" fill="#1877d1"/><rect x="9" y="17.500" width="8" height="1.500" fill="#1260ad"/></svg>
<svg class="abs" style="left:863px;top:1043px" width="24" height="26" viewBox="0 0 24 26"><path d="M7.500 7.500V5.500a4.500 4.500 0 0 1 9 0v2" fill="none" stroke="#35a8ea" stroke-width="1.800"/><path d="M1 7.500h22v14.500a3 3 0 0 1-3 3H4a3 3 0 0 1-3-3z" fill="#f4f4f4"/><rect x="7" y="12" width="4.300" height="4.300" fill="#f25022"/><rect x="12.700" y="12" width="4.300" height="4.300" fill="#7fba00"/><rect x="7" y="17.700" width="4.300" height="4.300" fill="#00a4ef"/><rect x="12.700" y="17.700" width="4.300" height="4.300" fill="#ffb900"/></svg>
<svg class="abs" style="left:909px;top:1043px" width="20" height="26" viewBox="0 0 20 26"><path d="M3 2l11-1.500 4 3-2 18-10 3.500L1 21z" fill="#d22"/><path d="M10 8l8 2-2 12-9 3z" fill="#2a52c9"/><path d="M3 5h13L8 17h9l-1 4H2L11 9H3z" fill="#111"/></svg>
<svg class="abs" style="left:950px;top:1046px" width="26" height="20" viewBox="0 0 26 20"><path d="M2 10c1-4 6-6 11-5 3-4 8-4 9-1 3 1 3 5 0 7-2 3-8 4-12 3-4 2-9 0-8-4z" fill="#6b6252"/><circle cx="6" cy="8.500" r="2" fill="#fff"/><circle cx="6" cy="8.500" r="1" fill="#000"/><circle cx="2.500" cy="11" r="1.500" fill="#222"/><path d="M12 12l10 5 2 2-3-.5z" fill="#b98"/></svg>
<svg class="abs" style="left:994px;top:1044px" width="24" height="24" viewBox="0 0 24 24"><rect x="1" y="1" width="17" height="22" fill="#e9edf5"/><rect x="2.500" y="2.500" width="14" height="14" fill="#2f6fd6"/><path d="M2.500 12l5-4 4 3 5-3v8.500h-14z" fill="#dfe9fb"/><rect x="2.500" y="16.500" width="14" height="3" fill="#1b3f8f"/><path d="M22 4L8 17l-2 3 3-1.500L23 5.500z" fill="#c22"/></svg>
<svg class="abs" style="left:1038px;top:1044px" width="24" height="24" viewBox="0 0 24 24"><circle cx="12" cy="12" r="11.500" fill="#fff"/><path d="M12 .5a11.500 11.500 0 0 1 10 5.750H12a5.750 5.750 0 0 0-5 2.900L2.050 6.250A11.500 11.500 0 0 1 12 .5z" fill="#ea4335"/><path d="M22 6.250A11.500 11.500 0 0 1 12.500 23.500l4.500-8.600a5.750 5.750 0 0 0 0-5.800z" fill="#fbbc04"/><path d="M12.500 23.500A11.500 11.500 0 0 1 2.050 6.250l5 8.650a5.750 5.750 0 0 0 5 2.850z" fill="#34a853"/><circle cx="12" cy="12" r="5.200" fill="#fff"/><circle cx="12" cy="12" r="4.200" fill="#4285f4"/></svg>
<div class="t" style="left:1079px;top:1045.500px;width:30px;text-align:center;font-size:8px;line-height:8px;height:8px;color:#000;white-space:normal">Ani</div>
<div class="t" style="left:1078px;top:1053.500px;width:32px;text-align:center;font-size:8px;line-height:8px;height:8px;color:#000">Builder</div>
<svg class="abs" style="left:1127px;top:1044px" width="24" height="24" viewBox="0 0 24 24"><circle cx="12" cy="12" r="11" fill="#0a0a0a" stroke="#fff" stroke-width="1.500"/><circle cx="12" cy="12" r="6.800" fill="#e31b23"/></svg>
<svg class="abs" style="left:1171px;top:1044px" width="24" height="24" viewBox="0 0 24 24"><rect width="24" height="24" rx="2" fill="#d60f1d"/><path d="M8 8l8 8M16 8l-8 8" stroke="#fff" stroke-width="2.200"/></svg>
<svg class="abs" style="left:1215px;top:1044px" width="24" height="24" viewBox="0 0 24 24"><rect width="24" height="24" fill="#4aa23a"/><rect x="4" y="5" width="6" height="6" fill="#0c0c0c"/><rect x="14" y="5" width="6" height="6" fill="#0c0c0c"/><path d="M10 11h4v3h3v8h-3v-3h-4v3H7v-8h3z" fill="#0c0c0c"/></svg>
<svg class="abs" style="left:1259px;top:1044px" width="24" height="24" viewBox="0 0 24 24"><defs><linearGradient id="pu" x1="0" y1="0" x2="1" y2="0"><stop offset="0" stop-color="#2b3fe0"/><stop offset=".55" stop-color="#a02bd0"/><stop offset="1" stop-color="#f0305a"/></linearGradient></defs><rect width="24" height="24" rx="1" fill="url(#pu)"/><path d="M6 17a7 7 0 1 1 12-1v3H8" fill="none" stroke="#fff" stroke-width="1.800"/><path d="M9 13a3.500 3.500 0 1 1 6 0v2H9z" fill="none" stroke="#fff" stroke-width="1.400"/></svg>
<svg class="abs" style="left:1302px;top:1044px" width="24" height="24" viewBox="0 0 24 24"><circle cx="12" cy="12" r="11.800" fill="#15325f"/><circle cx="16" cy="9" r="4" fill="none" stroke="#fff" stroke-width="1.800"/><circle cx="16" cy="9" r="1.700" fill="#fff"/><path d="M.5 12.500l8 3.500a3 3 0 1 0 2.500-3.200L13 10" fill="none" stroke="#fff" stroke-width="2"/><circle cx="9" cy="16.500" r="2" fill="#fff"/></svg>
<svg class="abs" style="left:1347px;top:1043px" width="22" height="26" viewBox="0 0 22 26"><rect x="1" y="2" width="20" height="23" rx="1.500" fill="#39b7ea"/><rect x="1" y="21" width="20" height="4" fill="#d08a3a"/><path d="M3 .5v3M6 .5v3M9 .5v3M12 .5v3M15 .5v3M18 .5v3" stroke="#8fdcf7" stroke-width="1.200"/><path d="M4 8h14M4 11.500h14M4 15h14M4 18.500h14" stroke="#d6f3fd" stroke-width="1.500"/></svg>
<div class="abs" style="left:1382px;top:1036px;width:40px;height:40px;border-radius:5px;background:#2b4246;border:1px solid #3a5054"></div>
<svg class="abs" style="left:1390px;top:1044px" width="24" height="24" viewBox="0 0 24 24"><rect width="24" height="24" fill="#111"/><text x="1" y="10" font-family="Liberation Sans,sans-serif" font-weight="bold" font-size="9" fill="#e8e8e8" textLength="14" lengthAdjust="spacingAndGlyphs">EM</text><text x="14" y="11" font-family="Liberation Sans,sans-serif" font-weight="bold" font-size="14" fill="#fff">4</text><rect x="1" y="11" width="22" height="1.500" fill="#e8e8e8"/><path d="M1 15h22M1 18h22M1 21h22" stroke="#c9a21a" stroke-width="1.600" stroke-dasharray="2 1.300"/></svg>
<div class="abs pill" style="left:828px"></div>
<div class="abs pill" style="left:1047px"></div>
<div class="abs pill" style="left:1136px"></div>
<div class="abs pill" style="left:1311px"></div>
<div class="abs pill" style="left:1355px"></div>
<div class="abs" style="left:1394px;top:1072px;width:16px;height:3px;border-radius:2px;background:#4cc2ff"></div>
<!-- tray -->
<svg class="abs" style="left:1665px;top:1052px" width="12" height="8" viewBox="0 0 12 8"><path d="M1 7l5-5 5 5" fill="none" stroke="#fff" stroke-width="1.500"/></svg>
<div class="t" style="left:1697px;top:1046px;font-size:12px;color:#fff;letter-spacing:-.6px">DEU</div>
<svg class="abs" style="left:1738px;top:1049px" width="17" height="13" viewBox="0 0 17 13"><path d="M1 4.500a11 11 0 0 1 15 0M3.300 7a7.500 7.500 0 0 1 10.400 0M5.700 9.400a4 4 0 0 1 5.600 0" fill="none" stroke="#fff" stroke-width="1.400" stroke-linecap="round"/><circle cx="8.500" cy="11.500" r="1.200" fill="#fff"/></svg>
<svg class="abs" style="left:1762px;top:1049px" width="18" height="14" viewBox="0 0 18 14"><path d="M1 5h2.500L7.500 1.500v11L3.500 9H1z" fill="none" stroke="#fff" stroke-width="1.200" stroke-linejoin="round"/><path d="M10 4.500a3.500 3.500 0 0 1 0 5" fill="none" stroke="#fff" stroke-width="1.200" stroke-linecap="round"/><path d="M12.300 2.500a6.500 6.500 0 0 1 0 9M14.800 1a9 9 0 0 1 0 12" fill="none" stroke="#6f8083" stroke-width="1.200" stroke-linecap="round"/></svg>
<svg class="abs" style="left:1786px;top:1047px" width="20" height="16" viewBox="0 0 20 16"><rect x="2.500" y="4.500" width="14" height="9" rx="2" fill="none" stroke="#fff" stroke-width="1.300"/><rect x="17" y="7" width="2" height="4" rx="1" fill="#fff"/><rect x="4.500" y="6.500" width="8" height="5" rx=".8" fill="#fff"/><path d="M5 .5L1.500 6H4.500L3.500 10 7.500 4.500H4.500z" fill="#fff" stroke="#172f33" stroke-width=".8"/></svg>
<div class="t" style="left:1800px;top:1038px;width:77px;text-align:right;font-size:12px;color:#fff">18:07</div>
<div class="t" style="left:1800px;top:1054px;width:77px;text-align:right;font-size:12px;color:#fff;letter-spacing:-.2px">09.09.2024</div>
<svg class="abs" style="left:1885px;top:1048px" width="15" height="16" viewBox="0 0 15 16"><path d="M7.500 1a4.800 4.800 0 0 0-4.800 4.800v3.400L1.300 12h12.400l-1.400-2.800V5.800A4.800 4.800 0 0 0 7.500 1zM5.700 12.300a1.900 1.900 0 0 0 3.600 0" fill="none" stroke="#fff" stroke-width="1.200" stroke-linejoin="round"/></svg>
</body></html>
